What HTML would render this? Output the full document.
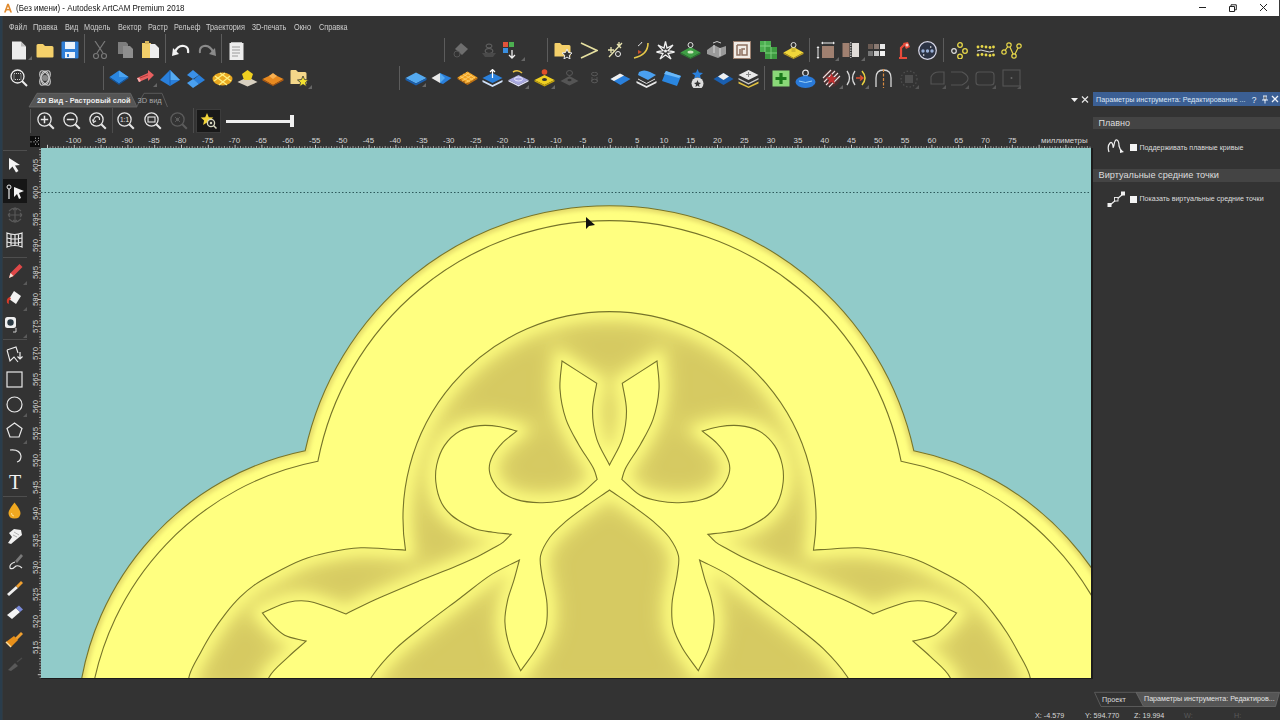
<!DOCTYPE html>
<html><head><meta charset="utf-8">
<style>
*{margin:0;padding:0;box-sizing:border-box}
html,body{width:1280px;height:720px;overflow:hidden;background:#333333;font-family:"Liberation Sans",sans-serif}
.a{position:absolute}
#title{left:0;top:0;width:1280px;height:16px;background:#ffffff}
#title .t{left:16px;top:3px;font-size:8px;line-height:10px;color:#111;white-space:nowrap;transform:scale(1,1.12);transform-origin:0 0}
.menu{top:22px;font-size:7.3px;line-height:9px;color:#cfcfcf;white-space:nowrap;transform:scale(1,1.12);transform-origin:0 0}
.sep{width:1px;background:#5a5a5a}
.rl{font-size:8px;color:#d2d2d2;white-space:nowrap;top:136px}
.vl{font-size:8px;color:#d2d2d2;white-space:nowrap;transform:rotate(-90deg);transform-origin:center}
.hdr{background:#444444;color:#dddddd;font-size:9.8px;white-space:nowrap}
.lbl{font-size:7.2px;color:#dcdcdc;white-space:nowrap}
.cb{background:#f4f4f4;width:7px;height:7px}
.st{top:710px;font-size:8px;color:#d8d8d8;white-space:nowrap}
</style></head><body>
<div class="a" style="left:0;top:16px;width:2px;height:704px;background:#2a3d4c"></div><div class="a" style="left:2px;top:16px;width:1px;height:704px;background:#313a40"></div>
<div id="title" class="a">
  <svg class="a" style="left:3px;top:3px" width="10" height="10" viewBox="0 0 10 10"><path d="M1 9.5 L4.2 0.8 L5.8 0.8 L9 9.5 L7.2 9.5 L5 3.2 L2.8 9.5Z" fill="#e08a2e"/><rect x="3" y="6" width="4" height="1.4" fill="#e08a2e"/></svg>
  <div class="a t">(Без имени) - Autodesk ArtCAM Premium 2018</div>
  <div class="a" style="left:1199px;top:7px;width:7px;height:1px;background:#222"></div>
  <svg class="a" style="left:1228px;top:3px" width="10" height="9"><path d="M1.5 3.5H6.5V8.5H1.5Z M3 3.5V1.8H8.3V6.8H6.5" fill="none" stroke="#222" stroke-width="1"/></svg>
  <svg class="a" style="left:1259px;top:3px" width="9" height="9"><path d="M1 1L8 8M8 1L1 8" stroke="#222" stroke-width="1"/></svg>
  <div class="a" style="left:1279px;top:0;width:1px;height:16px;background:#3a3a3a"></div>
</div>
<div class="a menu" style="left:9px">Файл</div>
<div class="a menu" style="left:33px">Правка</div>
<div class="a menu" style="left:65px">Вид</div>
<div class="a menu" style="left:84px">Модель</div>
<div class="a menu" style="left:118px">Вектор</div>
<div class="a menu" style="left:148px">Растр</div>
<div class="a menu" style="left:174px">Рельеф</div>
<div class="a menu" style="left:206px">Траектория</div>
<div class="a menu" style="left:252px">3D-печать</div>
<div class="a menu" style="left:294px">Окно</div>
<div class="a menu" style="left:319px">Справка</div>
<svg class="a" style="left:41px;top:148px" width="1050" height="530" viewBox="41 148 1050 530">
<defs>
<clipPath id="cpSil"><path d="M78.6 700.0 A285 285 0 0 1 305.2 450.7 A311.5 311.5 0 0 1 913.8 450.7 A285 285 0 0 1 1140.4 700.0 Z"/></clipPath>
<clipPath id="cpMain"><path d="M405.5 550.2 C398.4 549.7 391.5 549.1 384.3 548.7 C376.7 548.3 369.3 547.4 360.9 547.8 C350.9 548.3 338.3 550.3 328.1 552.5 C319.0 554.4 311.3 556.3 302.5 559.7 C292.4 563.5 280.1 570.2 271.2 575.0 C264.5 578.6 259.2 581.6 253.9 585.4 C248.8 589.0 244.5 592.8 240.0 597.2 C235.1 602.0 230.4 607.5 225.8 613.3 C221.0 619.4 216.2 626.2 212.0 632.8 C207.9 639.2 204.4 645.5 200.8 652.2 C197.0 659.3 192.2 666.5 189.7 674.4 C187.2 682.4 187.2 691.5 186.0 700.0 L265.0 700.0 C266.4 692.3 265.7 684.0 269.2 677.0 C273.1 669.4 282.2 662.8 288.6 656.6 C294.5 650.9 300.3 646.3 306.1 641.1 L306.1 641.1 C299.0 639.2 290.7 638.5 284.7 635.3 C279.3 632.4 275.0 627.6 271.1 623.6 C267.7 620.1 265.3 616.5 262.4 612.9 L262.4 612.9 C271.1 609.3 280.4 604.0 288.6 602.2 C295.4 600.7 301.6 600.4 308.0 601.2 C314.6 602.0 321.1 604.9 327.5 607.0 C333.8 609.1 339.8 611.6 346.0 613.9 L346.0 613.9 C356.0 609.0 365.1 604.3 376.1 599.3 C389.3 593.3 406.0 586.4 420.0 580.6 C432.7 575.4 446.1 570.4 456.5 566.0 C464.4 562.6 470.9 559.8 477.3 556.7 C482.9 553.9 488.3 550.9 492.9 548.3 C496.7 546.1 500.2 544.5 503.3 542.1 C506.2 539.8 508.5 536.9 511.1 534.3 L511.1 534.3 C505.0 533.6 498.7 533.0 492.9 532.2 C487.5 531.4 482.4 531.2 477.3 529.6 C472.0 527.9 466.3 524.9 461.7 522.3 C457.8 520.0 454.5 518.0 451.2 515.0 C447.7 511.8 444.2 508.1 441.7 503.3 C438.7 497.4 436.5 488.5 435.8 481.7 C435.2 475.8 435.5 470.7 436.7 465.0 C438.1 458.7 440.6 451.2 444.4 445.6 C448.3 439.9 454.0 434.3 460.0 431.0 C465.9 427.7 473.3 426.3 480.0 425.6 C486.6 424.9 493.7 425.7 500.0 426.7 C505.9 427.6 511.1 429.6 516.7 431.1 L516.7 431.1 C511.8 435.2 506.1 438.9 502.0 443.3 C498.3 447.2 494.8 451.4 492.7 455.8 C490.7 459.8 489.2 464.1 489.2 468.3 C489.2 472.5 490.7 476.9 492.7 480.8 C494.8 485.0 498.1 489.2 502.0 492.3 C506.1 495.6 511.1 497.9 516.7 499.6 C523.4 501.7 532.5 502.5 540.0 502.7 C546.9 502.9 553.5 502.3 560.0 501.0 C566.4 499.8 572.8 498.5 578.7 495.3 C585.3 491.7 591.0 484.7 597.2 479.4 L597.2 479.4 C596.1 476.1 595.8 473.4 594.0 469.4 C591.0 462.8 583.3 452.8 578.6 444.4 C574.0 436.2 569.1 428.4 566.0 419.4 C562.8 410.0 560.6 399.0 560.0 389.0 C559.4 379.5 561.3 370.3 562.0 361.0 L562.0 361.0 C573.6 368.4 585.1 375.9 596.7 383.3 L596.7 383.3 C595.3 392.5 592.5 401.7 592.5 411.0 C592.5 420.3 593.9 430.0 596.7 438.9 C599.5 448.0 605.2 456.3 609.5 465.0 L609.5 465.0 C613.8 456.3 619.5 448.0 622.3 438.9 C625.1 430.0 626.5 420.3 626.5 411.0 C626.5 401.7 623.7 392.5 622.3 383.3 L622.3 383.3 C633.9 375.9 645.4 368.4 657.0 361.0 L657.0 361.0 C657.7 370.3 659.6 379.5 659.0 389.0 C658.4 399.0 656.2 410.0 653.0 419.4 C649.9 428.4 645.0 436.2 640.4 444.4 C635.7 452.8 628.0 462.8 625.0 469.4 C623.2 473.4 622.9 476.1 621.8 479.4 L621.8 479.4 C628.0 484.7 633.7 491.7 640.3 495.3 C646.2 498.5 652.6 499.8 659.0 501.0 C665.5 502.3 672.1 502.9 679.0 502.7 C686.5 502.5 695.6 501.7 702.3 499.6 C707.9 497.9 712.9 495.6 717.0 492.3 C720.9 489.2 724.2 485.0 726.3 480.8 C728.3 476.9 729.8 472.5 729.8 468.3 C729.8 464.1 728.3 459.8 726.3 455.8 C724.2 451.4 720.7 447.2 717.0 443.3 C712.9 438.9 707.2 435.2 702.3 431.1 L702.3 431.1 C707.9 429.6 713.1 427.6 719.0 426.7 C725.3 425.7 732.4 424.9 739.0 425.6 C745.7 426.3 753.1 427.7 759.0 431.0 C765.0 434.3 770.7 439.9 774.6 445.6 C778.4 451.2 780.9 458.7 782.3 465.0 C783.5 470.7 783.8 475.8 783.2 481.7 C782.5 488.5 780.3 497.4 777.3 503.3 C774.8 508.1 771.3 511.8 767.8 515.0 C764.5 518.0 761.2 520.0 757.3 522.3 C752.7 524.9 747.0 527.9 741.7 529.6 C736.6 531.2 731.5 531.4 726.1 532.2 C720.3 533.0 714.0 533.6 707.9 534.3 L707.9 534.3 C710.5 536.9 712.8 539.8 715.7 542.1 C718.8 544.5 722.3 546.1 726.1 548.3 C730.7 550.9 736.1 553.9 741.7 556.7 C748.1 559.8 754.6 562.6 762.5 566.0 C772.9 570.4 786.3 575.4 799.0 580.6 C813.0 586.4 829.7 593.3 842.9 599.3 C853.9 604.3 863.0 609.0 873.0 613.9 L873.0 613.9 C879.2 611.6 885.2 609.1 891.5 607.0 C897.9 604.9 904.4 602.0 911.0 601.2 C917.4 600.4 923.6 600.7 930.4 602.2 C938.6 604.0 947.9 609.3 956.6 612.9 L956.6 612.9 C953.7 616.5 951.3 620.1 947.9 623.6 C944.0 627.6 939.7 632.4 934.3 635.3 C928.3 638.5 920.0 639.2 912.9 641.1 L912.9 641.1 C918.7 646.3 924.5 650.9 930.4 656.6 C936.8 662.8 945.9 669.4 949.8 677.0 C953.3 684.0 952.6 692.3 954.0 700.0 L1033.0 700.0 C1031.8 691.5 1031.8 682.4 1029.3 674.4 C1026.8 666.5 1022.0 659.3 1018.2 652.2 C1014.6 645.5 1011.1 639.2 1007.0 632.8 C1002.8 626.2 998.0 619.4 993.2 613.3 C988.6 607.5 983.9 602.0 979.0 597.2 C974.5 592.8 970.2 589.0 965.1 585.4 C959.8 581.6 954.5 578.6 947.8 575.0 C938.9 570.2 926.6 563.5 916.5 559.7 C907.7 556.3 900.0 554.4 890.9 552.5 C880.7 550.3 868.1 548.3 858.1 547.8 C849.7 547.4 842.3 548.3 834.7 548.7 C827.5 549.1 820.6 549.7 813.5 550.2 A206.5 206.5 0 1 0 405.5 550.2 Z"/></clipPath>
<clipPath id="cpVase"><path d="M609.5 490.0 C601.9 495.3 594.0 500.4 586.6 505.8 C579.4 511.0 571.9 516.2 565.5 521.7 C559.7 526.8 553.9 531.6 549.7 537.5 C545.7 543.1 541.8 549.7 540.5 556.0 C539.3 562.0 541.0 567.6 541.8 574.4 C542.9 583.0 546.4 594.3 547.0 603.5 C547.5 611.8 547.6 619.7 545.8 627.2 C544.0 634.6 540.4 641.4 536.5 648.3 C532.2 655.9 526.0 663.2 520.7 670.7 L520.7 670.7 C517.2 663.2 512.7 656.2 510.1 648.3 C507.4 640.0 505.2 630.2 504.9 621.9 C504.6 614.5 506.0 607.8 507.5 600.8 C509.0 593.7 512.1 586.6 514.1 579.7 C516.0 573.0 517.6 566.6 519.4 560.0 L519.4 560.0 C510.2 564.8 501.0 568.5 491.7 574.4 C481.2 581.0 471.2 589.8 460.0 598.2 C447.4 607.7 431.6 619.3 420.0 628.5 C410.7 635.9 403.3 641.3 395.5 648.9 C387.3 657.0 378.3 666.9 372.2 676.0 C366.9 683.9 364.1 692.0 360.0 700.0 L859.0 700.0 C854.9 692.0 852.1 683.9 846.8 676.0 C840.7 666.9 831.7 657.0 823.5 648.9 C815.7 641.3 808.3 635.9 799.0 628.5 C787.4 619.3 771.6 607.7 759.0 598.2 C747.8 589.8 737.8 581.0 727.3 574.4 C718.0 568.5 708.8 564.8 699.6 560.0 L699.6 560.0 C701.4 566.6 703.0 573.0 704.9 579.7 C706.9 586.6 710.0 593.7 711.5 600.8 C713.0 607.8 714.4 614.5 714.1 621.9 C713.8 630.2 711.6 640.0 708.9 648.3 C706.3 656.2 701.8 663.2 698.3 670.7 L698.3 670.7 C693.0 663.2 686.8 655.9 682.5 648.3 C678.6 641.4 675.0 634.6 673.2 627.2 C671.4 619.7 671.5 611.8 672.0 603.5 C672.6 594.3 676.1 583.0 677.2 574.4 C678.0 567.6 679.7 562.0 678.5 556.0 C677.2 549.7 673.3 543.1 669.3 537.5 C665.1 531.6 659.3 526.8 653.5 521.7 C647.1 516.2 639.6 511.0 632.4 505.8 C625.0 500.4 617.1 495.3 609.5 490.0 Z"/></clipPath>
<filter id="bl6" x="-10%" y="-10%" width="120%" height="120%"><feGaussianBlur stdDeviation="6.5"/></filter>
<filter id="bl10" x="-10%" y="-10%" width="120%" height="120%"><feGaussianBlur stdDeviation="10"/></filter>
<filter id="bl2" x="-10%" y="-10%" width="120%" height="120%"><feGaussianBlur stdDeviation="2.2"/></filter>
</defs>
<rect x="41" y="148" width="1050" height="530" fill="#91cbc9"/>
<path d="M78.6 700.0 A285 285 0 0 1 305.2 450.7 A311.5 311.5 0 0 1 913.8 450.7 A285 285 0 0 1 1140.4 700.0 Z" fill="#ffff80"/>
<g clip-path="url(#cpSil)"><path d="M78.6 700.0 A285 285 0 0 1 305.2 450.7 A311.5 311.5 0 0 1 913.8 450.7 A285 285 0 0 1 1140.4 700.0 Z" fill="none" stroke="#e4da6a" stroke-width="7" filter="url(#bl2)"/></g>
<g clip-path="url(#cpMain)"><rect x="41" y="148" width="1050" height="600" fill="#d6ca62"/><path d="M405.5 550.2 C398.4 549.7 391.5 549.1 384.3 548.7 C376.7 548.3 369.3 547.4 360.9 547.8 C350.9 548.3 338.3 550.3 328.1 552.5 C319.0 554.4 311.3 556.3 302.5 559.7 C292.4 563.5 280.1 570.2 271.2 575.0 C264.5 578.6 259.2 581.6 253.9 585.4 C248.8 589.0 244.5 592.8 240.0 597.2 C235.1 602.0 230.4 607.5 225.8 613.3 C221.0 619.4 216.2 626.2 212.0 632.8 C207.9 639.2 204.4 645.5 200.8 652.2 C197.0 659.3 192.2 666.5 189.7 674.4 C187.2 682.4 187.2 691.5 186.0 700.0 L265.0 700.0 C266.4 692.3 265.7 684.0 269.2 677.0 C273.1 669.4 282.2 662.8 288.6 656.6 C294.5 650.9 300.3 646.3 306.1 641.1 L306.1 641.1 C299.0 639.2 290.7 638.5 284.7 635.3 C279.3 632.4 275.0 627.6 271.1 623.6 C267.7 620.1 265.3 616.5 262.4 612.9 L262.4 612.9 C271.1 609.3 280.4 604.0 288.6 602.2 C295.4 600.7 301.6 600.4 308.0 601.2 C314.6 602.0 321.1 604.9 327.5 607.0 C333.8 609.1 339.8 611.6 346.0 613.9 L346.0 613.9 C356.0 609.0 365.1 604.3 376.1 599.3 C389.3 593.3 406.0 586.4 420.0 580.6 C432.7 575.4 446.1 570.4 456.5 566.0 C464.4 562.6 470.9 559.8 477.3 556.7 C482.9 553.9 488.3 550.9 492.9 548.3 C496.7 546.1 500.2 544.5 503.3 542.1 C506.2 539.8 508.5 536.9 511.1 534.3 L511.1 534.3 C505.0 533.6 498.7 533.0 492.9 532.2 C487.5 531.4 482.4 531.2 477.3 529.6 C472.0 527.9 466.3 524.9 461.7 522.3 C457.8 520.0 454.5 518.0 451.2 515.0 C447.7 511.8 444.2 508.1 441.7 503.3 C438.7 497.4 436.5 488.5 435.8 481.7 C435.2 475.8 435.5 470.7 436.7 465.0 C438.1 458.7 440.6 451.2 444.4 445.6 C448.3 439.9 454.0 434.3 460.0 431.0 C465.9 427.7 473.3 426.3 480.0 425.6 C486.6 424.9 493.7 425.7 500.0 426.7 C505.9 427.6 511.1 429.6 516.7 431.1 L516.7 431.1 C511.8 435.2 506.1 438.9 502.0 443.3 C498.3 447.2 494.8 451.4 492.7 455.8 C490.7 459.8 489.2 464.1 489.2 468.3 C489.2 472.5 490.7 476.9 492.7 480.8 C494.8 485.0 498.1 489.2 502.0 492.3 C506.1 495.6 511.1 497.9 516.7 499.6 C523.4 501.7 532.5 502.5 540.0 502.7 C546.9 502.9 553.5 502.3 560.0 501.0 C566.4 499.8 572.8 498.5 578.7 495.3 C585.3 491.7 591.0 484.7 597.2 479.4 L597.2 479.4 C596.1 476.1 595.8 473.4 594.0 469.4 C591.0 462.8 583.3 452.8 578.6 444.4 C574.0 436.2 569.1 428.4 566.0 419.4 C562.8 410.0 560.6 399.0 560.0 389.0 C559.4 379.5 561.3 370.3 562.0 361.0 L562.0 361.0 C573.6 368.4 585.1 375.9 596.7 383.3 L596.7 383.3 C595.3 392.5 592.5 401.7 592.5 411.0 C592.5 420.3 593.9 430.0 596.7 438.9 C599.5 448.0 605.2 456.3 609.5 465.0 L609.5 465.0 C613.8 456.3 619.5 448.0 622.3 438.9 C625.1 430.0 626.5 420.3 626.5 411.0 C626.5 401.7 623.7 392.5 622.3 383.3 L622.3 383.3 C633.9 375.9 645.4 368.4 657.0 361.0 L657.0 361.0 C657.7 370.3 659.6 379.5 659.0 389.0 C658.4 399.0 656.2 410.0 653.0 419.4 C649.9 428.4 645.0 436.2 640.4 444.4 C635.7 452.8 628.0 462.8 625.0 469.4 C623.2 473.4 622.9 476.1 621.8 479.4 L621.8 479.4 C628.0 484.7 633.7 491.7 640.3 495.3 C646.2 498.5 652.6 499.8 659.0 501.0 C665.5 502.3 672.1 502.9 679.0 502.7 C686.5 502.5 695.6 501.7 702.3 499.6 C707.9 497.9 712.9 495.6 717.0 492.3 C720.9 489.2 724.2 485.0 726.3 480.8 C728.3 476.9 729.8 472.5 729.8 468.3 C729.8 464.1 728.3 459.8 726.3 455.8 C724.2 451.4 720.7 447.2 717.0 443.3 C712.9 438.9 707.2 435.2 702.3 431.1 L702.3 431.1 C707.9 429.6 713.1 427.6 719.0 426.7 C725.3 425.7 732.4 424.9 739.0 425.6 C745.7 426.3 753.1 427.7 759.0 431.0 C765.0 434.3 770.7 439.9 774.6 445.6 C778.4 451.2 780.9 458.7 782.3 465.0 C783.5 470.7 783.8 475.8 783.2 481.7 C782.5 488.5 780.3 497.4 777.3 503.3 C774.8 508.1 771.3 511.8 767.8 515.0 C764.5 518.0 761.2 520.0 757.3 522.3 C752.7 524.9 747.0 527.9 741.7 529.6 C736.6 531.2 731.5 531.4 726.1 532.2 C720.3 533.0 714.0 533.6 707.9 534.3 L707.9 534.3 C710.5 536.9 712.8 539.8 715.7 542.1 C718.8 544.5 722.3 546.1 726.1 548.3 C730.7 550.9 736.1 553.9 741.7 556.7 C748.1 559.8 754.6 562.6 762.5 566.0 C772.9 570.4 786.3 575.4 799.0 580.6 C813.0 586.4 829.7 593.3 842.9 599.3 C853.9 604.3 863.0 609.0 873.0 613.9 L873.0 613.9 C879.2 611.6 885.2 609.1 891.5 607.0 C897.9 604.9 904.4 602.0 911.0 601.2 C917.4 600.4 923.6 600.7 930.4 602.2 C938.6 604.0 947.9 609.3 956.6 612.9 L956.6 612.9 C953.7 616.5 951.3 620.1 947.9 623.6 C944.0 627.6 939.7 632.4 934.3 635.3 C928.3 638.5 920.0 639.2 912.9 641.1 L912.9 641.1 C918.7 646.3 924.5 650.9 930.4 656.6 C936.8 662.8 945.9 669.4 949.8 677.0 C953.3 684.0 952.6 692.3 954.0 700.0 L1033.0 700.0 C1031.8 691.5 1031.8 682.4 1029.3 674.4 C1026.8 666.5 1022.0 659.3 1018.2 652.2 C1014.6 645.5 1011.1 639.2 1007.0 632.8 C1002.8 626.2 998.0 619.4 993.2 613.3 C988.6 607.5 983.9 602.0 979.0 597.2 C974.5 592.8 970.2 589.0 965.1 585.4 C959.8 581.6 954.5 578.6 947.8 575.0 C938.9 570.2 926.6 563.5 916.5 559.7 C907.7 556.3 900.0 554.4 890.9 552.5 C880.7 550.3 868.1 548.3 858.1 547.8 C849.7 547.4 842.3 548.3 834.7 548.7 C827.5 549.1 820.6 549.7 813.5 550.2 A206.5 206.5 0 1 0 405.5 550.2 Z" fill="none" stroke="#ffff80" stroke-width="26" opacity="0.45" filter="url(#bl10)"/><path d="M405.5 550.2 C398.4 549.7 391.5 549.1 384.3 548.7 C376.7 548.3 369.3 547.4 360.9 547.8 C350.9 548.3 338.3 550.3 328.1 552.5 C319.0 554.4 311.3 556.3 302.5 559.7 C292.4 563.5 280.1 570.2 271.2 575.0 C264.5 578.6 259.2 581.6 253.9 585.4 C248.8 589.0 244.5 592.8 240.0 597.2 C235.1 602.0 230.4 607.5 225.8 613.3 C221.0 619.4 216.2 626.2 212.0 632.8 C207.9 639.2 204.4 645.5 200.8 652.2 C197.0 659.3 192.2 666.5 189.7 674.4 C187.2 682.4 187.2 691.5 186.0 700.0 L265.0 700.0 C266.4 692.3 265.7 684.0 269.2 677.0 C273.1 669.4 282.2 662.8 288.6 656.6 C294.5 650.9 300.3 646.3 306.1 641.1 L306.1 641.1 C299.0 639.2 290.7 638.5 284.7 635.3 C279.3 632.4 275.0 627.6 271.1 623.6 C267.7 620.1 265.3 616.5 262.4 612.9 L262.4 612.9 C271.1 609.3 280.4 604.0 288.6 602.2 C295.4 600.7 301.6 600.4 308.0 601.2 C314.6 602.0 321.1 604.9 327.5 607.0 C333.8 609.1 339.8 611.6 346.0 613.9 L346.0 613.9 C356.0 609.0 365.1 604.3 376.1 599.3 C389.3 593.3 406.0 586.4 420.0 580.6 C432.7 575.4 446.1 570.4 456.5 566.0 C464.4 562.6 470.9 559.8 477.3 556.7 C482.9 553.9 488.3 550.9 492.9 548.3 C496.7 546.1 500.2 544.5 503.3 542.1 C506.2 539.8 508.5 536.9 511.1 534.3 L511.1 534.3 C505.0 533.6 498.7 533.0 492.9 532.2 C487.5 531.4 482.4 531.2 477.3 529.6 C472.0 527.9 466.3 524.9 461.7 522.3 C457.8 520.0 454.5 518.0 451.2 515.0 C447.7 511.8 444.2 508.1 441.7 503.3 C438.7 497.4 436.5 488.5 435.8 481.7 C435.2 475.8 435.5 470.7 436.7 465.0 C438.1 458.7 440.6 451.2 444.4 445.6 C448.3 439.9 454.0 434.3 460.0 431.0 C465.9 427.7 473.3 426.3 480.0 425.6 C486.6 424.9 493.7 425.7 500.0 426.7 C505.9 427.6 511.1 429.6 516.7 431.1 L516.7 431.1 C511.8 435.2 506.1 438.9 502.0 443.3 C498.3 447.2 494.8 451.4 492.7 455.8 C490.7 459.8 489.2 464.1 489.2 468.3 C489.2 472.5 490.7 476.9 492.7 480.8 C494.8 485.0 498.1 489.2 502.0 492.3 C506.1 495.6 511.1 497.9 516.7 499.6 C523.4 501.7 532.5 502.5 540.0 502.7 C546.9 502.9 553.5 502.3 560.0 501.0 C566.4 499.8 572.8 498.5 578.7 495.3 C585.3 491.7 591.0 484.7 597.2 479.4 L597.2 479.4 C596.1 476.1 595.8 473.4 594.0 469.4 C591.0 462.8 583.3 452.8 578.6 444.4 C574.0 436.2 569.1 428.4 566.0 419.4 C562.8 410.0 560.6 399.0 560.0 389.0 C559.4 379.5 561.3 370.3 562.0 361.0 L562.0 361.0 C573.6 368.4 585.1 375.9 596.7 383.3 L596.7 383.3 C595.3 392.5 592.5 401.7 592.5 411.0 C592.5 420.3 593.9 430.0 596.7 438.9 C599.5 448.0 605.2 456.3 609.5 465.0 L609.5 465.0 C613.8 456.3 619.5 448.0 622.3 438.9 C625.1 430.0 626.5 420.3 626.5 411.0 C626.5 401.7 623.7 392.5 622.3 383.3 L622.3 383.3 C633.9 375.9 645.4 368.4 657.0 361.0 L657.0 361.0 C657.7 370.3 659.6 379.5 659.0 389.0 C658.4 399.0 656.2 410.0 653.0 419.4 C649.9 428.4 645.0 436.2 640.4 444.4 C635.7 452.8 628.0 462.8 625.0 469.4 C623.2 473.4 622.9 476.1 621.8 479.4 L621.8 479.4 C628.0 484.7 633.7 491.7 640.3 495.3 C646.2 498.5 652.6 499.8 659.0 501.0 C665.5 502.3 672.1 502.9 679.0 502.7 C686.5 502.5 695.6 501.7 702.3 499.6 C707.9 497.9 712.9 495.6 717.0 492.3 C720.9 489.2 724.2 485.0 726.3 480.8 C728.3 476.9 729.8 472.5 729.8 468.3 C729.8 464.1 728.3 459.8 726.3 455.8 C724.2 451.4 720.7 447.2 717.0 443.3 C712.9 438.9 707.2 435.2 702.3 431.1 L702.3 431.1 C707.9 429.6 713.1 427.6 719.0 426.7 C725.3 425.7 732.4 424.9 739.0 425.6 C745.7 426.3 753.1 427.7 759.0 431.0 C765.0 434.3 770.7 439.9 774.6 445.6 C778.4 451.2 780.9 458.7 782.3 465.0 C783.5 470.7 783.8 475.8 783.2 481.7 C782.5 488.5 780.3 497.4 777.3 503.3 C774.8 508.1 771.3 511.8 767.8 515.0 C764.5 518.0 761.2 520.0 757.3 522.3 C752.7 524.9 747.0 527.9 741.7 529.6 C736.6 531.2 731.5 531.4 726.1 532.2 C720.3 533.0 714.0 533.6 707.9 534.3 L707.9 534.3 C710.5 536.9 712.8 539.8 715.7 542.1 C718.8 544.5 722.3 546.1 726.1 548.3 C730.7 550.9 736.1 553.9 741.7 556.7 C748.1 559.8 754.6 562.6 762.5 566.0 C772.9 570.4 786.3 575.4 799.0 580.6 C813.0 586.4 829.7 593.3 842.9 599.3 C853.9 604.3 863.0 609.0 873.0 613.9 L873.0 613.9 C879.2 611.6 885.2 609.1 891.5 607.0 C897.9 604.9 904.4 602.0 911.0 601.2 C917.4 600.4 923.6 600.7 930.4 602.2 C938.6 604.0 947.9 609.3 956.6 612.9 L956.6 612.9 C953.7 616.5 951.3 620.1 947.9 623.6 C944.0 627.6 939.7 632.4 934.3 635.3 C928.3 638.5 920.0 639.2 912.9 641.1 L912.9 641.1 C918.7 646.3 924.5 650.9 930.4 656.6 C936.8 662.8 945.9 669.4 949.8 677.0 C953.3 684.0 952.6 692.3 954.0 700.0 L1033.0 700.0 C1031.8 691.5 1031.8 682.4 1029.3 674.4 C1026.8 666.5 1022.0 659.3 1018.2 652.2 C1014.6 645.5 1011.1 639.2 1007.0 632.8 C1002.8 626.2 998.0 619.4 993.2 613.3 C988.6 607.5 983.9 602.0 979.0 597.2 C974.5 592.8 970.2 589.0 965.1 585.4 C959.8 581.6 954.5 578.6 947.8 575.0 C938.9 570.2 926.6 563.5 916.5 559.7 C907.7 556.3 900.0 554.4 890.9 552.5 C880.7 550.3 868.1 548.3 858.1 547.8 C849.7 547.4 842.3 548.3 834.7 548.7 C827.5 549.1 820.6 549.7 813.5 550.2 A206.5 206.5 0 1 0 405.5 550.2 Z" fill="none" stroke="#ffff80" stroke-width="12" filter="url(#bl6)"/></g>
<g clip-path="url(#cpVase)"><rect x="41" y="148" width="1050" height="600" fill="#d6ca62"/><path d="M609.5 490.0 C601.9 495.3 594.0 500.4 586.6 505.8 C579.4 511.0 571.9 516.2 565.5 521.7 C559.7 526.8 553.9 531.6 549.7 537.5 C545.7 543.1 541.8 549.7 540.5 556.0 C539.3 562.0 541.0 567.6 541.8 574.4 C542.9 583.0 546.4 594.3 547.0 603.5 C547.5 611.8 547.6 619.7 545.8 627.2 C544.0 634.6 540.4 641.4 536.5 648.3 C532.2 655.9 526.0 663.2 520.7 670.7 L520.7 670.7 C517.2 663.2 512.7 656.2 510.1 648.3 C507.4 640.0 505.2 630.2 504.9 621.9 C504.6 614.5 506.0 607.8 507.5 600.8 C509.0 593.7 512.1 586.6 514.1 579.7 C516.0 573.0 517.6 566.6 519.4 560.0 L519.4 560.0 C510.2 564.8 501.0 568.5 491.7 574.4 C481.2 581.0 471.2 589.8 460.0 598.2 C447.4 607.7 431.6 619.3 420.0 628.5 C410.7 635.9 403.3 641.3 395.5 648.9 C387.3 657.0 378.3 666.9 372.2 676.0 C366.9 683.9 364.1 692.0 360.0 700.0 L859.0 700.0 C854.9 692.0 852.1 683.9 846.8 676.0 C840.7 666.9 831.7 657.0 823.5 648.9 C815.7 641.3 808.3 635.9 799.0 628.5 C787.4 619.3 771.6 607.7 759.0 598.2 C747.8 589.8 737.8 581.0 727.3 574.4 C718.0 568.5 708.8 564.8 699.6 560.0 L699.6 560.0 C701.4 566.6 703.0 573.0 704.9 579.7 C706.9 586.6 710.0 593.7 711.5 600.8 C713.0 607.8 714.4 614.5 714.1 621.9 C713.8 630.2 711.6 640.0 708.9 648.3 C706.3 656.2 701.8 663.2 698.3 670.7 L698.3 670.7 C693.0 663.2 686.8 655.9 682.5 648.3 C678.6 641.4 675.0 634.6 673.2 627.2 C671.4 619.7 671.5 611.8 672.0 603.5 C672.6 594.3 676.1 583.0 677.2 574.4 C678.0 567.6 679.7 562.0 678.5 556.0 C677.2 549.7 673.3 543.1 669.3 537.5 C665.1 531.6 659.3 526.8 653.5 521.7 C647.1 516.2 639.6 511.0 632.4 505.8 C625.0 500.4 617.1 495.3 609.5 490.0 Z" fill="none" stroke="#ffff80" stroke-width="26" opacity="0.45" filter="url(#bl10)"/><path d="M609.5 490.0 C601.9 495.3 594.0 500.4 586.6 505.8 C579.4 511.0 571.9 516.2 565.5 521.7 C559.7 526.8 553.9 531.6 549.7 537.5 C545.7 543.1 541.8 549.7 540.5 556.0 C539.3 562.0 541.0 567.6 541.8 574.4 C542.9 583.0 546.4 594.3 547.0 603.5 C547.5 611.8 547.6 619.7 545.8 627.2 C544.0 634.6 540.4 641.4 536.5 648.3 C532.2 655.9 526.0 663.2 520.7 670.7 L520.7 670.7 C517.2 663.2 512.7 656.2 510.1 648.3 C507.4 640.0 505.2 630.2 504.9 621.9 C504.6 614.5 506.0 607.8 507.5 600.8 C509.0 593.7 512.1 586.6 514.1 579.7 C516.0 573.0 517.6 566.6 519.4 560.0 L519.4 560.0 C510.2 564.8 501.0 568.5 491.7 574.4 C481.2 581.0 471.2 589.8 460.0 598.2 C447.4 607.7 431.6 619.3 420.0 628.5 C410.7 635.9 403.3 641.3 395.5 648.9 C387.3 657.0 378.3 666.9 372.2 676.0 C366.9 683.9 364.1 692.0 360.0 700.0 L859.0 700.0 C854.9 692.0 852.1 683.9 846.8 676.0 C840.7 666.9 831.7 657.0 823.5 648.9 C815.7 641.3 808.3 635.9 799.0 628.5 C787.4 619.3 771.6 607.7 759.0 598.2 C747.8 589.8 737.8 581.0 727.3 574.4 C718.0 568.5 708.8 564.8 699.6 560.0 L699.6 560.0 C701.4 566.6 703.0 573.0 704.9 579.7 C706.9 586.6 710.0 593.7 711.5 600.8 C713.0 607.8 714.4 614.5 714.1 621.9 C713.8 630.2 711.6 640.0 708.9 648.3 C706.3 656.2 701.8 663.2 698.3 670.7 L698.3 670.7 C693.0 663.2 686.8 655.9 682.5 648.3 C678.6 641.4 675.0 634.6 673.2 627.2 C671.4 619.7 671.5 611.8 672.0 603.5 C672.6 594.3 676.1 583.0 677.2 574.4 C678.0 567.6 679.7 562.0 678.5 556.0 C677.2 549.7 673.3 543.1 669.3 537.5 C665.1 531.6 659.3 526.8 653.5 521.7 C647.1 516.2 639.6 511.0 632.4 505.8 C625.0 500.4 617.1 495.3 609.5 490.0 Z" fill="none" stroke="#ffff80" stroke-width="12" filter="url(#bl6)"/></g>
<g fill="none" stroke="#76742a" stroke-width="1.1">
<path d="M78.6 700.0 A285 285 0 0 1 305.2 450.7 A311.5 311.5 0 0 1 913.8 450.7 A285 285 0 0 1 1140.4 700.0 Z"/><path d="M90.8 700.0 A284 284 0 0 1 317.9 461.2 A297 297 0 0 1 901.1 461.2 A284 284 0 0 1 1128.2 700.0"/><path d="M405.5 550.2 C398.4 549.7 391.5 549.1 384.3 548.7 C376.7 548.3 369.3 547.4 360.9 547.8 C350.9 548.3 338.3 550.3 328.1 552.5 C319.0 554.4 311.3 556.3 302.5 559.7 C292.4 563.5 280.1 570.2 271.2 575.0 C264.5 578.6 259.2 581.6 253.9 585.4 C248.8 589.0 244.5 592.8 240.0 597.2 C235.1 602.0 230.4 607.5 225.8 613.3 C221.0 619.4 216.2 626.2 212.0 632.8 C207.9 639.2 204.4 645.5 200.8 652.2 C197.0 659.3 192.2 666.5 189.7 674.4 C187.2 682.4 187.2 691.5 186.0 700.0 L265.0 700.0 C266.4 692.3 265.7 684.0 269.2 677.0 C273.1 669.4 282.2 662.8 288.6 656.6 C294.5 650.9 300.3 646.3 306.1 641.1 L306.1 641.1 C299.0 639.2 290.7 638.5 284.7 635.3 C279.3 632.4 275.0 627.6 271.1 623.6 C267.7 620.1 265.3 616.5 262.4 612.9 L262.4 612.9 C271.1 609.3 280.4 604.0 288.6 602.2 C295.4 600.7 301.6 600.4 308.0 601.2 C314.6 602.0 321.1 604.9 327.5 607.0 C333.8 609.1 339.8 611.6 346.0 613.9 L346.0 613.9 C356.0 609.0 365.1 604.3 376.1 599.3 C389.3 593.3 406.0 586.4 420.0 580.6 C432.7 575.4 446.1 570.4 456.5 566.0 C464.4 562.6 470.9 559.8 477.3 556.7 C482.9 553.9 488.3 550.9 492.9 548.3 C496.7 546.1 500.2 544.5 503.3 542.1 C506.2 539.8 508.5 536.9 511.1 534.3 L511.1 534.3 C505.0 533.6 498.7 533.0 492.9 532.2 C487.5 531.4 482.4 531.2 477.3 529.6 C472.0 527.9 466.3 524.9 461.7 522.3 C457.8 520.0 454.5 518.0 451.2 515.0 C447.7 511.8 444.2 508.1 441.7 503.3 C438.7 497.4 436.5 488.5 435.8 481.7 C435.2 475.8 435.5 470.7 436.7 465.0 C438.1 458.7 440.6 451.2 444.4 445.6 C448.3 439.9 454.0 434.3 460.0 431.0 C465.9 427.7 473.3 426.3 480.0 425.6 C486.6 424.9 493.7 425.7 500.0 426.7 C505.9 427.6 511.1 429.6 516.7 431.1 L516.7 431.1 C511.8 435.2 506.1 438.9 502.0 443.3 C498.3 447.2 494.8 451.4 492.7 455.8 C490.7 459.8 489.2 464.1 489.2 468.3 C489.2 472.5 490.7 476.9 492.7 480.8 C494.8 485.0 498.1 489.2 502.0 492.3 C506.1 495.6 511.1 497.9 516.7 499.6 C523.4 501.7 532.5 502.5 540.0 502.7 C546.9 502.9 553.5 502.3 560.0 501.0 C566.4 499.8 572.8 498.5 578.7 495.3 C585.3 491.7 591.0 484.7 597.2 479.4 L597.2 479.4 C596.1 476.1 595.8 473.4 594.0 469.4 C591.0 462.8 583.3 452.8 578.6 444.4 C574.0 436.2 569.1 428.4 566.0 419.4 C562.8 410.0 560.6 399.0 560.0 389.0 C559.4 379.5 561.3 370.3 562.0 361.0 L562.0 361.0 C573.6 368.4 585.1 375.9 596.7 383.3 L596.7 383.3 C595.3 392.5 592.5 401.7 592.5 411.0 C592.5 420.3 593.9 430.0 596.7 438.9 C599.5 448.0 605.2 456.3 609.5 465.0 L609.5 465.0 C613.8 456.3 619.5 448.0 622.3 438.9 C625.1 430.0 626.5 420.3 626.5 411.0 C626.5 401.7 623.7 392.5 622.3 383.3 L622.3 383.3 C633.9 375.9 645.4 368.4 657.0 361.0 L657.0 361.0 C657.7 370.3 659.6 379.5 659.0 389.0 C658.4 399.0 656.2 410.0 653.0 419.4 C649.9 428.4 645.0 436.2 640.4 444.4 C635.7 452.8 628.0 462.8 625.0 469.4 C623.2 473.4 622.9 476.1 621.8 479.4 L621.8 479.4 C628.0 484.7 633.7 491.7 640.3 495.3 C646.2 498.5 652.6 499.8 659.0 501.0 C665.5 502.3 672.1 502.9 679.0 502.7 C686.5 502.5 695.6 501.7 702.3 499.6 C707.9 497.9 712.9 495.6 717.0 492.3 C720.9 489.2 724.2 485.0 726.3 480.8 C728.3 476.9 729.8 472.5 729.8 468.3 C729.8 464.1 728.3 459.8 726.3 455.8 C724.2 451.4 720.7 447.2 717.0 443.3 C712.9 438.9 707.2 435.2 702.3 431.1 L702.3 431.1 C707.9 429.6 713.1 427.6 719.0 426.7 C725.3 425.7 732.4 424.9 739.0 425.6 C745.7 426.3 753.1 427.7 759.0 431.0 C765.0 434.3 770.7 439.9 774.6 445.6 C778.4 451.2 780.9 458.7 782.3 465.0 C783.5 470.7 783.8 475.8 783.2 481.7 C782.5 488.5 780.3 497.4 777.3 503.3 C774.8 508.1 771.3 511.8 767.8 515.0 C764.5 518.0 761.2 520.0 757.3 522.3 C752.7 524.9 747.0 527.9 741.7 529.6 C736.6 531.2 731.5 531.4 726.1 532.2 C720.3 533.0 714.0 533.6 707.9 534.3 L707.9 534.3 C710.5 536.9 712.8 539.8 715.7 542.1 C718.8 544.5 722.3 546.1 726.1 548.3 C730.7 550.9 736.1 553.9 741.7 556.7 C748.1 559.8 754.6 562.6 762.5 566.0 C772.9 570.4 786.3 575.4 799.0 580.6 C813.0 586.4 829.7 593.3 842.9 599.3 C853.9 604.3 863.0 609.0 873.0 613.9 L873.0 613.9 C879.2 611.6 885.2 609.1 891.5 607.0 C897.9 604.9 904.4 602.0 911.0 601.2 C917.4 600.4 923.6 600.7 930.4 602.2 C938.6 604.0 947.9 609.3 956.6 612.9 L956.6 612.9 C953.7 616.5 951.3 620.1 947.9 623.6 C944.0 627.6 939.7 632.4 934.3 635.3 C928.3 638.5 920.0 639.2 912.9 641.1 L912.9 641.1 C918.7 646.3 924.5 650.9 930.4 656.6 C936.8 662.8 945.9 669.4 949.8 677.0 C953.3 684.0 952.6 692.3 954.0 700.0 L1033.0 700.0 C1031.8 691.5 1031.8 682.4 1029.3 674.4 C1026.8 666.5 1022.0 659.3 1018.2 652.2 C1014.6 645.5 1011.1 639.2 1007.0 632.8 C1002.8 626.2 998.0 619.4 993.2 613.3 C988.6 607.5 983.9 602.0 979.0 597.2 C974.5 592.8 970.2 589.0 965.1 585.4 C959.8 581.6 954.5 578.6 947.8 575.0 C938.9 570.2 926.6 563.5 916.5 559.7 C907.7 556.3 900.0 554.4 890.9 552.5 C880.7 550.3 868.1 548.3 858.1 547.8 C849.7 547.4 842.3 548.3 834.7 548.7 C827.5 549.1 820.6 549.7 813.5 550.2 A206.5 206.5 0 1 0 405.5 550.2 Z"/><path d="M609.5 490.0 C601.9 495.3 594.0 500.4 586.6 505.8 C579.4 511.0 571.9 516.2 565.5 521.7 C559.7 526.8 553.9 531.6 549.7 537.5 C545.7 543.1 541.8 549.7 540.5 556.0 C539.3 562.0 541.0 567.6 541.8 574.4 C542.9 583.0 546.4 594.3 547.0 603.5 C547.5 611.8 547.6 619.7 545.8 627.2 C544.0 634.6 540.4 641.4 536.5 648.3 C532.2 655.9 526.0 663.2 520.7 670.7 L520.7 670.7 C517.2 663.2 512.7 656.2 510.1 648.3 C507.4 640.0 505.2 630.2 504.9 621.9 C504.6 614.5 506.0 607.8 507.5 600.8 C509.0 593.7 512.1 586.6 514.1 579.7 C516.0 573.0 517.6 566.6 519.4 560.0 L519.4 560.0 C510.2 564.8 501.0 568.5 491.7 574.4 C481.2 581.0 471.2 589.8 460.0 598.2 C447.4 607.7 431.6 619.3 420.0 628.5 C410.7 635.9 403.3 641.3 395.5 648.9 C387.3 657.0 378.3 666.9 372.2 676.0 C366.9 683.9 364.1 692.0 360.0 700.0 L859.0 700.0 C854.9 692.0 852.1 683.9 846.8 676.0 C840.7 666.9 831.7 657.0 823.5 648.9 C815.7 641.3 808.3 635.9 799.0 628.5 C787.4 619.3 771.6 607.7 759.0 598.2 C747.8 589.8 737.8 581.0 727.3 574.4 C718.0 568.5 708.8 564.8 699.6 560.0 L699.6 560.0 C701.4 566.6 703.0 573.0 704.9 579.7 C706.9 586.6 710.0 593.7 711.5 600.8 C713.0 607.8 714.4 614.5 714.1 621.9 C713.8 630.2 711.6 640.0 708.9 648.3 C706.3 656.2 701.8 663.2 698.3 670.7 L698.3 670.7 C693.0 663.2 686.8 655.9 682.5 648.3 C678.6 641.4 675.0 634.6 673.2 627.2 C671.4 619.7 671.5 611.8 672.0 603.5 C672.6 594.3 676.1 583.0 677.2 574.4 C678.0 567.6 679.7 562.0 678.5 556.0 C677.2 549.7 673.3 543.1 669.3 537.5 C665.1 531.6 659.3 526.8 653.5 521.7 C647.1 516.2 639.6 511.0 632.4 505.8 C625.0 500.4 617.1 495.3 609.5 490.0 Z"/>
</g>
<line x1="41" y1="192.5" x2="1091" y2="192.5" stroke="#2d5a5c" stroke-width="1" stroke-dasharray="1.5 2"/>
<path d="M586 217 L586 229 L589 226 L595 225 Z" fill="#111"/>
</svg>
<svg class="a" style="left:11px;top:41px" width="16" height="19" viewBox="0 0 16 19"><path d="M1 0.5H10L15 5.5V18.5H1Z" fill="#ececec"/><path d="M10 0.5V5.5H15Z" fill="#bdbdbd"/></svg>
<svg class="a" style="left:28px;top:56px" width="4" height="4" viewBox="0 0 4 4"><path d="M4 0L4 4L0 4Z" fill="#666"/></svg>
<svg class="a" style="left:36px;top:43px" width="18" height="15" viewBox="0 0 18 15"><path d="M0.5 2.5Q0.5 1 2 1H7L9 3H16Q17.5 3 17.5 4.5V13.5Q17.5 14.5 16.5 14.5H1.5Q0.5 14.5 0.5 13.5Z" fill="#f4d06a"/></svg>
<svg class="a" style="left:61px;top:41px" width="18" height="18" viewBox="0 0 18 18"><rect x="0.5" y="0.5" width="17" height="17" rx="1" fill="#2f7fd8"/><rect x="4" y="1" width="10" height="7" fill="#eaf2fb"/><rect x="4" y="11" width="10" height="6" fill="#eaf2fb"/><rect x="6" y="13" width="2" height="3" fill="#2f7fd8"/></svg>
<div class="a" style="left:84px;top:34px;width:1px;height:29px;background:#5c5c5c"></div>
<svg class="a" style="left:92px;top:41px" width="16" height="18" viewBox="0 0 16 18"><g stroke="#7a7a7a" stroke-width="1.2" fill="none"><path d="M3 0L11 12M13 0L5 12"/><circle cx="4" cy="15" r="2.5"/><circle cx="12" cy="15" r="2.5"/></g></svg>
<svg class="a" style="left:118px;top:42px" width="16" height="17" viewBox="0 0 16 17"><path d="M0 0H8L10 2V12H0Z" fill="#7d7d7d"/><path d="M5 4H12L15 7V16H5Z" fill="#8e8e8e"/></svg>
<svg class="a" style="left:142px;top:41px" width="18" height="18" viewBox="0 0 18 18"><rect x="0" y="2" width="9" height="15" fill="#f2cf6a"/><rect x="3" y="0" width="4" height="3" fill="#d8b65a"/><path d="M8 3H13L17 7V17H8Z" fill="#ededed"/></svg>
<div class="a" style="left:165px;top:34px;width:1px;height:29px;background:#5c5c5c"></div>
<svg class="a" style="left:172px;top:44px" width="18" height="13" viewBox="0 0 18 13"><path d="M3 8 Q6 1 12 2 Q17 3 16 9" stroke="#f2f2f2" stroke-width="2.2" fill="none"/><path d="M0 12L1 4L7 10Z" fill="#f2f2f2"/></svg>
<svg class="a" style="left:198px;top:44px" width="18" height="13" viewBox="0 0 18 13"><path d="M15 8 Q12 1 6 2 Q1 3 2 9" stroke="#8a8a8a" stroke-width="2" fill="none"/><path d="M18 12L17 4L11 10Z" fill="#8a8a8a"/></svg>
<div class="a" style="left:221px;top:34px;width:1px;height:29px;background:#5c5c5c"></div>
<svg class="a" style="left:229px;top:42px" width="15" height="18" viewBox="0 0 15 18"><rect x="0.5" y="1" width="14" height="17" fill="#ededed"/><g stroke="#9a9a9a" stroke-width="1"><path d="M3 5H11M3 8H11M3 11H11M3 14H9"/></g><path d="M2 0.5H13" stroke="#bbb"/></svg>
<div class="a" style="left:444px;top:38px;width:1px;height:24px;background:#5c5c5c"></div>
<svg class="a" style="left:452px;top:41px" width="18" height="18" viewBox="0 0 18 18"><path d="M9 2L16 8L10 14L3 8Z" fill="#6e6e6e"/><circle cx="5" cy="13" r="3" stroke="#555" fill="none"/></svg>
<svg class="a" style="left:481px;top:43px" width="16" height="14" viewBox="0 0 16 14"><ellipse cx="8" cy="3" rx="3" ry="2" stroke="#666" fill="none"/><ellipse cx="8" cy="8" rx="4" ry="2.5" stroke="#666" fill="none"/><path d="M1 10L15 10L12 14H4Z" fill="#4a4a4a"/></svg>
<svg class="a" style="left:503px;top:41px" width="16" height="19" viewBox="0 0 16 19"><rect x="0" y="1" width="5" height="5" fill="#e0533b"/><rect x="6" y="1" width="5" height="5" fill="#4caf50"/><rect x="0" y="7" width="5" height="5" fill="#3a8fe0"/><path d="M9 9V17M6 14L9 17L12 14" stroke="#f0f0f0" stroke-width="1.3" fill="none"/></svg>
<svg class="a" style="left:521px;top:57px" width="4" height="4" viewBox="0 0 4 4"><path d="M4 0L4 4L0 4Z" fill="#666"/></svg>
<div class="a" style="left:547px;top:38px;width:1px;height:24px;background:#5c5c5c"></div>
<svg class="a" style="left:554px;top:42px" width="19" height="17" viewBox="0 0 19 17"><path d="M0.5 2Q0.5 1 1.5 1H6L8 3H15Q16.5 3 16.5 4.5V14.5H0.5Z" fill="#f4d06a"/><path d="M13 7L14.5 10.5L18 11L15.3 13.3L16 17L13 15L10 17L10.7 13.3L8 11L11.5 10.5Z" fill="#333" stroke="#eee" stroke-width="1"/></svg>
<svg class="a" style="left:580px;top:42px" width="18" height="17" viewBox="0 0 18 17"><path d="M1 1L17 8.5L1 16" stroke="#e6e0a0" stroke-width="1.6" fill="none"/></svg>
<svg class="a" style="left:607px;top:41px" width="16" height="18" viewBox="0 0 16 18"><g stroke="#e8e4b0" stroke-width="1.3"><path d="M2 16L15 2M1 9H7M4 6V12M10 3L14 7M12 1V5"/></g><circle cx="11" cy="13" r="2.5" stroke="#eee" fill="none"/></svg>
<svg class="a" style="left:632px;top:42px" width="17" height="17" viewBox="0 0 17 17"><path d="M16 1Q16 13 2 16" stroke="#e6c84a" stroke-width="1.6" fill="none"/><path d="M6 4Q9 2 10 0" stroke="#ddd" fill="none"/><path d="M6 8L10 10L6 12Z" fill="#c8502a"/></svg>
<svg class="a" style="left:656px;top:41px" width="19" height="19" viewBox="0 0 19 19"><g stroke="#f0f0f0" stroke-width="1.3" fill="none"><path d="M9.5 0.5L11 7L17 4L12 9.5L18.5 11L12 12.5L15 18L9.5 14L4 18L7 12.5L0.5 11L7 9.5L2 4L8 7Z"/></g><circle cx="9.5" cy="10" r="1.5" fill="#f0f0f0"/></svg>
<svg class="a" style="left:680px;top:41px" width="21" height="18" viewBox="0 0 21 18"><path d="M10.5 6L20.5 11.5L10.5 17L0.5 11.5Z" fill="#3f9f45"/><path d="M0.5 11.5L10.5 17L20.5 11.5V13L10.5 18L0.5 13Z" fill="#2d7a33"/><ellipse cx="10.5" cy="11" rx="3" ry="1.6" fill="#cfe8c0"/><circle cx="10.5" cy="4" r="2.5" stroke="#e0e0e0" fill="none"/></svg>
<svg class="a" style="left:706px;top:41px" width="21" height="18" viewBox="0 0 21 18"><path d="M1 9L8 4L14 7L20 5L20 13L12 17L1 13Z" fill="#9a9a9a"/><path d="M8 4L8 12M14 7V15" stroke="#d8d8d8"/><path d="M7 2Q11 -1 15 2" stroke="#ccc" fill="none"/></svg>
<svg class="a" style="left:733px;top:41px" width="18" height="18" viewBox="0 0 18 18"><rect x="0.5" y="0.5" width="17" height="17" fill="#f2ece6" stroke="#9c8070"/><path d="M4 4H14V14H9V8H12M4 4V14H7V8" stroke="#8e7060" stroke-width="1.5" fill="none"/></svg>
<svg class="a" style="left:760px;top:41px" width="17" height="18" viewBox="0 0 17 18"><rect x="0" y="0" width="11" height="11" fill="#4caf50"/><rect x="5" y="6" width="12" height="12" fill="#3d9b40"/><path d="M0 5H11M5 0V11M5 12H17M11 6V18" stroke="#7fd07f" stroke-width="1"/></svg>
<svg class="a" style="left:783px;top:41px" width="21" height="18" viewBox="0 0 21 18"><path d="M10.5 6L20.5 11.5L10.5 17L0.5 11.5Z" fill="#f0d63a"/><path d="M0.5 11.5L10.5 17L20.5 11.5V13L10.5 18L0.5 13Z" fill="#c0a020"/><rect x="8.5" y="6" width="4" height="5" fill="#d0b830"/><circle cx="10.5" cy="4" r="2.5" stroke="#e0e0e0" fill="none"/></svg>
<div class="a" style="left:809px;top:38px;width:1px;height:24px;background:#5c5c5c"></div>
<svg class="a" style="left:816px;top:41px" width="19" height="18" viewBox="0 0 19 18"><rect x="6" y="5" width="12" height="12" fill="#a08070"/><path d="M6 2H18M2 6V17" stroke="#eee" stroke-width="1"/><path d="M5 2L7 0.5V3.5ZM19 2L17 0.5V3.5ZM2 5L0.5 7H3.5ZM2 18L0.5 16H3.5Z" fill="#eee"/></svg>
<svg class="a" style="left:835px;top:57px" width="4" height="4" viewBox="0 0 4 4"><path d="M4 0L4 4L0 4Z" fill="#666"/></svg>
<svg class="a" style="left:842px;top:42px" width="19" height="16" viewBox="0 0 19 16"><rect x="0.5" y="1" width="7" height="14" fill="#a08070"/><rect x="10" y="1" width="7" height="14" fill="#e0dcd8"/><path d="M8.8 0V16" stroke="#ddd" stroke-dasharray="1.5 1"/></svg>
<svg class="a" style="left:861px;top:57px" width="4" height="4" viewBox="0 0 4 4"><path d="M4 0L4 4L0 4Z" fill="#666"/></svg>
<svg class="a" style="left:868px;top:44px" width="18" height="12" viewBox="0 0 18 12"><rect x="0" y="0" width="5" height="5" fill="#6a5a52"/><rect x="6" y="0" width="5" height="5" fill="#8a7a72"/><rect x="12" y="0" width="5" height="5" fill="#e8e8e8"/><rect x="0" y="7" width="5" height="5" fill="#777"/><rect x="6" y="7" width="5" height="5" fill="#c8c8c8"/><rect x="12" y="7" width="5" height="5" fill="#f2f2f2"/></svg>
<svg class="a" style="left:896px;top:42px" width="14" height="17" viewBox="0 0 14 17"><path d="M3 16H11M5 16V6L9 2" stroke="#e84a3a" stroke-width="2.2" fill="none"/><path d="M7 1L12 0L14 5L10 7Z" fill="#e84a3a"/><circle cx="11" cy="3" r="1.5" fill="#f8d0c8"/></svg>
<svg class="a" style="left:917px;top:41px" width="21" height="19" viewBox="0 0 21 19"><circle cx="10.5" cy="9.5" r="8.8" stroke="#d8d8e8" stroke-width="1.2" fill="#2c3344"/><circle cx="6" cy="10" r="1.7" fill="#9ab0d8"/><circle cx="10.5" cy="10" r="1.7" fill="#9ab0d8"/><circle cx="15" cy="10" r="1.7" fill="#9ab0d8"/><path d="M13 5L15 6L13 7Z" fill="#ddd"/><path d="M6 13L8 14L6 15Z" fill="#ddd"/></svg>
<div class="a" style="left:943px;top:38px;width:1px;height:24px;background:#5c5c5c"></div>
<svg class="a" style="left:951px;top:42px" width="17" height="17" viewBox="0 0 17 17"><g stroke="#e8d84a" stroke-width="1.3" fill="none"><circle cx="9" cy="3" r="2.3"/><circle cx="14" cy="9" r="2.3"/><circle cx="9" cy="14.5" r="2.3"/></g><circle cx="3" cy="9" r="2.3" stroke="#ddd" stroke-width="1.2" fill="none"/></svg>
<svg class="a" style="left:976px;top:45px" width="19" height="12" viewBox="0 0 19 12"><g fill="#e8d84a"><circle cx="2" cy="2" r="1.4"/><circle cx="6" cy="1.5" r="1.4"/><circle cx="10" cy="2" r="1.4"/><circle cx="14" cy="2.5" r="1.4"/><circle cx="17.5" cy="2" r="1.4"/><circle cx="2" cy="10" r="1.4"/><circle cx="6" cy="9.5" r="1.4"/><circle cx="10" cy="10" r="1.4"/><circle cx="14" cy="10.5" r="1.4"/><circle cx="17.5" cy="10" r="1.4"/></g><path d="M1 6Q5 4 9 6T18 6" stroke="#ddd" fill="none"/></svg>
<svg class="a" style="left:1001px;top:42px" width="21" height="17" viewBox="0 0 21 17"><path d="M3 10L8 3L13 14L18 4" stroke="#e8d84a" stroke-width="1.2" fill="none"/><g stroke="#e8d84a" stroke-width="1.2" fill="#333"><circle cx="3" cy="10" r="2.2"/><circle cx="8" cy="3" r="2.2"/><circle cx="13" cy="14" r="2.2"/><circle cx="18" cy="4" r="2.2"/></g></svg>
<svg class="a" style="left:10px;top:69px" width="18" height="18" viewBox="0 0 18 18"><circle cx="7.5" cy="7.5" r="6.5" stroke="#eee" stroke-width="1.3" fill="none"/><rect x="4" y="4.5" width="7" height="6" stroke="#ccc" stroke-dasharray="1 1" fill="none"/><path d="M12 12L17 17" stroke="#eee" stroke-width="2"/></svg>
<svg class="a" style="left:36px;top:69px" width="18" height="18" viewBox="0 0 18 18"><g stroke="#c8c8c8" stroke-width="1.2" fill="none"><ellipse cx="9" cy="9" rx="8" ry="4" transform="rotate(60 9 9)"/><ellipse cx="9" cy="9" rx="8" ry="4" transform="rotate(-60 9 9)"/><ellipse cx="9" cy="9" rx="4" ry="7"/></g><circle cx="9" cy="9" r="3" fill="#888"/></svg>
<div class="a" style="left:103px;top:66px;width:1px;height:24px;background:#5c5c5c"></div>
<svg class="a" style="left:109px;top:70px" width="20" height="15" viewBox="0 0 20 15"><path d="M10 0.5L19.5 7L10 13.5L0.5 7Z" fill="#2a86e0"/><path d="M0.5 7L10 13.5L19.5 7L19.5 8.2L10 14.7L0.5 8.2Z" fill="#135aa8"/><path d="M10 0.5L19.5 7L10 7Z" fill="#4aa3f0"/></svg>
<svg class="a" style="left:136px;top:69px" width="19" height="16" viewBox="0 0 19 16"><path d="M1 9L12 4L12 1L18 6L12 12L12 9L3 13Z" fill="#e86060"/><path d="M1 9L3 13L5 12L3 9Z" fill="#f5b0b0"/><path d="M4 9L12 6" stroke="#b83a3a"/></svg>
<svg class="a" style="left:153px;top:83px" width="4" height="4" viewBox="0 0 4 4"><path d="M4 0L4 4L0 4Z" fill="#666"/></svg>
<svg class="a" style="left:160px;top:69px" width="21" height="18" viewBox="0 0 21 18"><path d="M10 1L20 11L10 17L0 11Z" fill="#2a80dc"/><path d="M10 1L20 11L10 11Z" fill="#55aaf0"/><path d="M10 1L10 17" stroke="#1860b0"/></svg>
<svg class="a" style="left:186px;top:69px" width="20" height="19" viewBox="0 0 20 19"><path d="M7 1L13 6L7 10L1 6Z" fill="#3a90e8"/><path d="M13 6L19 11L13 15L7 11Z" fill="#2a80dc"/><path d="M7 10L13 15L7 19L1 14Z" fill="#4aa0f0"/></svg>
<svg class="a" style="left:212px;top:72px" width="21" height="14" viewBox="0 0 21 14"><ellipse cx="10.5" cy="7" rx="10" ry="6.5" fill="#e8a820"/><g stroke="#fff080" stroke-width="1.2"><path d="M3 4L15 13M8 1L19 9M2 9L13 1M7 13L18 4"/></g></svg>
<svg class="a" style="left:237px;top:69px" width="21" height="18" viewBox="0 0 21 18"><path d="M10.5 8L20.5 13L10.5 17.5L0.5 13Z" fill="#d8d0c0"/><path d="M10.5 1L16 5L14 11H7L5 5Z" fill="#f0d020"/></svg>
<svg class="a" style="left:262px;top:71px" width="22" height="15" viewBox="0 0 22 15"><path d="M11 3L21.5 8L11 14L0.5 8Z" fill="#e88a20"/><path d="M0.5 8L11 14L21.5 8V9.5L11 15L0.5 9.5Z" fill="#b05a10"/><path d="M7 5L11 2L15 5L11 8Z" fill="#f8b050"/></svg>
<svg class="a" style="left:290px;top:69px" width="20" height="19" viewBox="0 0 20 19"><path d="M0.5 2Q0.5 1 1.5 1H6L8 3H15Q16.5 3 16.5 4.5V15H0.5Z" fill="#f4d78a"/><path d="M13 7L14.5 10.5L18.5 11L15.5 13.5L16.5 17.5L13 15.5L9.5 17.5L10.5 13.5L7.5 11L11.5 10.5Z" fill="#f2e030" stroke="#333" stroke-width="0.8"/></svg>
<svg class="a" style="left:308px;top:85px" width="4" height="4" viewBox="0 0 4 4"><path d="M4 0L4 4L0 4Z" fill="#666"/></svg>
<div class="a" style="left:399px;top:66px;width:1px;height:24px;background:#5c5c5c"></div>
<svg class="a" style="left:405px;top:72px" width="22" height="14" viewBox="0 0 22 14"><path d="M11 0.5L21.5 6L11 11.5L0.5 6Z" fill="#55aaf0"/><path d="M0.5 6L11 11.5L21.5 6V8L11 13.5L0.5 8Z" fill="#1a60b0"/></svg>
<svg class="a" style="left:422px;top:83px" width="4" height="4" viewBox="0 0 4 4"><path d="M4 0L4 4L0 4Z" fill="#666"/></svg>
<svg class="a" style="left:431px;top:71px" width="21" height="15" viewBox="0 0 21 15"><path d="M0.5 7L9 2V12Z" fill="#e8e8e8"/><path d="M9 2L20.5 7L12 13L9 12Z" fill="#2a80dc"/><path d="M9 2L14 7L9 12Z" fill="#55aaf0"/></svg>
<svg class="a" style="left:457px;top:71px" width="21" height="15" viewBox="0 0 21 15"><path d="M10.5 0.5L20.5 6.5L10.5 12.5L0.5 6.5Z" fill="#f0a020"/><path d="M0.5 6.5L10.5 12.5L20.5 6.5V8L10.5 14L0.5 8Z" fill="#c07010"/><g stroke="#ffd070" stroke-width="0.8"><path d="M3 5L13 11M6 3L16 9M9 1.5L18 7M2 8L12 2M5 10L15 4M8 12L18 6"/></g></svg>
<svg class="a" style="left:482px;top:69px" width="21" height="18" viewBox="0 0 21 18"><path d="M10.5 4L20.5 9L10.5 14L0.5 9Z" fill="#2a80dc"/><path d="M0.5 11L10.5 16L20.5 11V13L10.5 18L0.5 13Z" fill="#cfe0f8"/><path d="M10.5 9V1M8 3L10.5 0.5L13 3" stroke="#fff" stroke-width="1.2" fill="none"/></svg>
<svg class="a" style="left:508px;top:69px" width="21" height="18" viewBox="0 0 21 18"><path d="M10.5 6L20.5 11L10.5 16L0.5 11Z" fill="#a8a8e0"/><path d="M0.5 11L10.5 16L20.5 11V12.5L10.5 17.5L0.5 12.5Z" fill="#e0e0f8"/><ellipse cx="10.5" cy="10" rx="4" ry="2" stroke="#e8e8ff" fill="none"/><path d="M5 3Q10 0 14 4" stroke="#e8c040" stroke-width="1.5" fill="none"/></svg>
<svg class="a" style="left:525px;top:85px" width="4" height="4" viewBox="0 0 4 4"><path d="M4 0L4 4L0 4Z" fill="#666"/></svg>
<svg class="a" style="left:534px;top:69px" width="21" height="18" viewBox="0 0 21 18"><path d="M10.5 6L20.5 11L10.5 16L0.5 11Z" fill="#f0d020"/><path d="M0.5 11L10.5 16L20.5 11V12.5L10.5 17.5L0.5 12.5Z" fill="#c0a010"/><ellipse cx="10.5" cy="10.5" rx="2.5" ry="1.5" fill="#333"/><circle cx="10.5" cy="3" r="2.8" fill="#e0502a"/></svg>
<svg class="a" style="left:551px;top:85px" width="4" height="4" viewBox="0 0 4 4"><path d="M4 0L4 4L0 4Z" fill="#666"/></svg>
<svg class="a" style="left:560px;top:69px" width="19" height="17" viewBox="0 0 19 17"><path d="M9.5 7L18.5 12L9.5 16.5L0.5 12Z" fill="#555"/><ellipse cx="9.5" cy="4" rx="3" ry="2.5" stroke="#5a5a5a" fill="none"/><ellipse cx="9.5" cy="11" rx="2" ry="1.2" fill="#333"/></svg>
<svg class="a" style="left:590px;top:72px" width="9" height="12" viewBox="0 0 9 12"><ellipse cx="4.5" cy="2" rx="3" ry="1.8" stroke="#5a5a5a" fill="none"/><path d="M2 5V9M7 5V9" stroke="#555"/><ellipse cx="4.5" cy="9" rx="3" ry="1.8" stroke="#5a5a5a" fill="none"/></svg>
<svg class="a" style="left:610px;top:71px" width="21" height="15" viewBox="0 0 21 15"><path d="M10.5 3L20.5 8L10.5 14L0.5 8Z" fill="#2a80dc"/><path d="M0.5 8L10 2.5L14 4.5L4 10Z" fill="#f0f0f0"/></svg>
<svg class="a" style="left:636px;top:69px" width="21" height="19" viewBox="0 0 21 19"><path d="M3 3Q8 0 14 3L20 6L12 11L2 6Z" fill="#4aa0f0"/><path d="M0.5 12L10.5 17L20.5 12V14L10.5 19L0.5 14Z" fill="#e8e8e8"/><path d="M2 10L10.5 14.5L19 10" stroke="#ddd" fill="none"/></svg>
<svg class="a" style="left:661px;top:70px" width="21" height="17" viewBox="0 0 21 17"><path d="M5 1L20 6L16 16L1 11Z" fill="#2a86e0"/><path d="M5 1L20 6L18 8L3 4Z" fill="#6ab8f8"/></svg>
<svg class="a" style="left:690px;top:69px" width="15" height="19" viewBox="0 0 15 19"><path d="M7.5 0L9 3.5L13 4L10 6.5L11 10L7.5 8L4 10L5 6.5L2 4L6 3.5Z" fill="#2a80dc"/><circle cx="7.5" cy="14.5" r="6" fill="#ddd"/><path d="M7.5 11L8.5 13.5L11 14L9 15.5L9.5 18L7.5 16.5L5.5 18L6 15.5L4 14L6.5 13.5Z" fill="#333"/></svg>
<svg class="a" style="left:713px;top:72px" width="21" height="14" viewBox="0 0 21 14"><path d="M10.5 1L20.5 7L10.5 13L0.5 7Z" fill="#1a5fb0"/><path d="M10.5 1L16 4.5L10.5 8L5 4.5Z" fill="#f0f0f0"/></svg>
<svg class="a" style="left:738px;top:69px" width="21" height="19" viewBox="0 0 21 19"><path d="M10.5 1L20.5 6L10.5 11L0.5 6Z" fill="#e8e8e8"/><path d="M0.5 9L10.5 14L20.5 9V10.5L10.5 15.5L0.5 10.5Z" fill="#c8c8c8"/><path d="M0.5 12.5L10.5 17.5L20.5 12.5V14.5L10.5 19L0.5 14.5Z" fill="#e0c040"/><path d="M10.5 3V8M8 5.5H13" stroke="#888"/></svg>
<div class="a" style="left:764px;top:66px;width:1px;height:24px;background:#5c5c5c"></div>
<svg class="a" style="left:772px;top:70px" width="18" height="17" viewBox="0 0 18 17"><rect x="0.5" y="0.5" width="17" height="16" fill="#8ad878"/><path d="M9 3V14M3.5 8.5H14.5" stroke="#1a7a1a" stroke-width="3.2"/></svg>
<svg class="a" style="left:795px;top:69px" width="21" height="19" viewBox="0 0 21 19"><ellipse cx="10.5" cy="13" rx="10" ry="6" fill="#2a7ad8"/><path d="M4 12Q10.5 15 17 12" stroke="#9ad0f8" fill="none"/><circle cx="10.5" cy="4" r="2.8" stroke="#e8e8e8" stroke-width="1.2" fill="none"/><rect x="8" y="6.5" width="5" height="2" fill="#2a7ad8"/></svg>
<svg class="a" style="left:822px;top:69px" width="19" height="19" viewBox="0 0 19 19"><circle cx="9.5" cy="9.5" r="8.5" fill="#4a3030"/><g stroke="#f0e0e0" stroke-width="1.1"><path d="M2 13L13 2M4 16L16 4M7 18L18 7M1 9L9 1"/></g><path d="M9.5 4L11 8L15 8.5L12 11L13 15L9.5 13L6 15L7 11L4 8.5L8 8Z" fill="#c03030"/></svg>
<svg class="a" style="left:839px;top:85px" width="4" height="4" viewBox="0 0 4 4"><path d="M4 0L4 4L0 4Z" fill="#666"/></svg>
<svg class="a" style="left:846px;top:70px" width="22" height="16" viewBox="0 0 22 16"><path d="M1 1Q6 8 1 15M9 1Q4 8 9 15" stroke="#d8d8d8" stroke-width="1.3" fill="none"/><path d="M10 8H16M14 5.5L17 8L14 10.5" stroke="#e05030" stroke-width="1.5" fill="none"/><path d="M16 1Q22 8 16 15" stroke="#e8d040" stroke-width="1.5" fill="none"/></svg>
<svg class="a" style="left:865px;top:85px" width="4" height="4" viewBox="0 0 4 4"><path d="M4 0L4 4L0 4Z" fill="#666"/></svg>
<svg class="a" style="left:875px;top:69px" width="17" height="19" viewBox="0 0 17 19"><path d="M1 18V9Q1 1 8.5 1Q16 1 16 9V18" stroke="#d8d8d8" stroke-width="1.3" fill="none"/><path d="M8.5 0V19" stroke="#d88a40" stroke-width="1.2" stroke-dasharray="3 1.5"/></svg>
<svg class="a" style="left:899px;top:70px" width="20" height="18" viewBox="0 0 20 18"><circle cx="10" cy="9" r="8" stroke="#505050" stroke-width="1.2" stroke-dasharray="1.5 2" fill="none"/><rect x="6" y="5" width="8" height="8" fill="#4e4e4e"/></svg>
<svg class="a" style="left:915px;top:85px" width="4" height="4" viewBox="0 0 4 4"><path d="M4 0L4 4L0 4Z" fill="#555"/></svg>
<svg class="a" style="left:930px;top:71px" width="16" height="15" viewBox="0 0 16 15"><path d="M1 13V6Q3 1 9 1H14V13Z" stroke="#555" stroke-width="1.1" fill="none"/></svg>
<svg class="a" style="left:942px;top:85px" width="4" height="4" viewBox="0 0 4 4"><path d="M4 0L4 4L0 4Z" fill="#555"/></svg>
<svg class="a" style="left:950px;top:71px" width="19" height="15" viewBox="0 0 19 15"><path d="M1 1H12Q18 4 18 7.5Q18 11 12 14H1" stroke="#555" stroke-width="1.1" fill="none"/></svg>
<svg class="a" style="left:965px;top:85px" width="4" height="4" viewBox="0 0 4 4"><path d="M4 0L4 4L0 4Z" fill="#555"/></svg>
<svg class="a" style="left:975px;top:71px" width="20" height="15" viewBox="0 0 20 15"><rect x="1" y="1" width="18" height="13" rx="3" stroke="#555" stroke-width="1.1" fill="none"/></svg>
<svg class="a" style="left:992px;top:85px" width="4" height="4" viewBox="0 0 4 4"><path d="M4 0L4 4L0 4Z" fill="#555"/></svg>
<svg class="a" style="left:1002px;top:69px" width="19" height="18" viewBox="0 0 19 18"><rect x="1" y="1" width="17" height="16" stroke="#555" stroke-width="1.1" fill="none"/><circle cx="9.5" cy="9" r="1" fill="#666"/></svg>
<svg class="a" style="left:1017px;top:85px" width="4" height="4" viewBox="0 0 4 4"><path d="M4 0L4 4L0 4Z" fill="#555"/></svg>
<svg class="a" style="left:28px;top:92px" width="142" height="16" viewBox="0 0 142 16"><path d="M1 15 L9 1.3 H102.5 L109 15Z" fill="#555555" stroke="#6a6a6a" stroke-width="0.8"/><path d="M108.5 15 L116 1.3 H134 L139.5 15" fill="none" stroke="#5e5e5e" stroke-width="0.9"/></svg>
<div class="a" style="left:37px;top:96px;font-size:7.4px;line-height:9px;font-weight:bold;color:#ececec;white-space:nowrap">2D Вид - Растровый слой</div>
<div class="a" style="left:137.5px;top:96px;font-size:7.5px;line-height:9px;color:#a8a8a8;white-space:nowrap">3D вид</div>
<svg class="a" style="left:1070px;top:95px" width="20" height="10" viewBox="0 0 20 10"><path d="M1 3H8L4.5 7Z" fill="#eeeeee"/><path d="M12 1.5L18 7.5M18 1.5L12 7.5" stroke="#e6e6e6" stroke-width="1.2"/></svg>
<div class="a" style="left:30px;top:109px;width:1px;height:24px;background:#555"></div>
<svg class="a" style="left:37px;top:112px" width="18" height="18" viewBox="0 0 18 18"><g stroke="#e6e6e6" stroke-width="1.3" fill="none"><circle cx="7.5" cy="7.5" r="6.6"/><path d="M12.3 12.3L16.8 16.8" stroke-width="2"/><path d="M7.5 3.8V11.2M3.8 7.5H11.2" stroke-width="1.5"/></g></svg>
<svg class="a" style="left:63px;top:112px" width="18" height="18" viewBox="0 0 18 18"><g stroke="#e6e6e6" stroke-width="1.3" fill="none"><circle cx="7.5" cy="7.5" r="6.6"/><path d="M12.3 12.3L16.8 16.8" stroke-width="2"/><path d="M3.8 7.5H11.2" stroke-width="1.5"/></g></svg>
<svg class="a" style="left:89px;top:112px" width="18" height="18" viewBox="0 0 18 18"><g stroke="#e6e6e6" stroke-width="1.3" fill="none"><circle cx="7.5" cy="7.5" r="6.6"/><path d="M12.3 12.3L16.8 16.8" stroke-width="2"/><path d="M4.5 9Q5 4.5 8.5 4.5Q11 5 10.5 8" stroke-width="1.1"/><path d="M3.5 7.5L4.5 10.5L7 8.8" stroke-width="1.1"/></g></svg>
<div class="a" style="left:112px;top:108px;width:1px;height:25px;background:#4c4c4c"></div>
<svg class="a" style="left:117px;top:112px" width="18" height="18" viewBox="0 0 18 18"><g stroke="#e6e6e6" stroke-width="1.3" fill="none"><circle cx="7.5" cy="7.5" r="6.6"/><path d="M12.3 12.3L16.8 16.8" stroke-width="2"/><text x="7.5" y="9.8" font-size="6.5" text-anchor="middle" fill="#e6e6e6" stroke="none" font-family="Liberation Sans">1:1</text></g></svg>
<svg class="a" style="left:144px;top:112px" width="18" height="18" viewBox="0 0 18 18"><g stroke="#e6e6e6" stroke-width="1.3" fill="none"><circle cx="7.5" cy="7.5" r="6.6"/><path d="M12.3 12.3L16.8 16.8" stroke-width="2"/><rect x="4" y="5" width="7" height="5" stroke-width="1.1"/></g></svg>
<svg class="a" style="left:170px;top:112px" width="18" height="18" viewBox="0 0 18 18"><g stroke="#5c5c5c" stroke-width="1.3" fill="none"><circle cx="7.5" cy="7.5" r="6.6"/><path d="M12.3 12.3L16.8 16.8" stroke-width="2"/><path d="M5 5L10 10M10 5L5 10" stroke-width="0.9"/><circle cx="7.5" cy="7.5" r="1" /></g></svg>
<div class="a" style="left:193px;top:108px;width:1px;height:25px;background:#4c4c4c"></div>
<div class="a" style="left:196px;top:109px;width:25px;height:24px;background:#191919;border:1px solid #3c3c3c"></div>
<svg class="a" style="left:200px;top:112px" width="18" height="18" viewBox="0 0 18 18"><path d="M7 1L8.8 5.2L13.3 5.6L9.9 8.5L10.9 12.9L7 10.6L3.1 12.9L4.1 8.5L0.7 5.6L5.2 5.2Z" fill="#f2d43a"/><circle cx="11" cy="11" r="3.6" stroke="#d8d8c0" stroke-width="1.3" fill="#222"/><circle cx="11" cy="11" r="1.2" fill="#d8d8c0"/><path d="M13.5 13.5L16.5 16.5" stroke="#d8d8c0" stroke-width="1.5"/></svg>
<div class="a" style="left:226px;top:119.5px;width:64px;height:3px;background:#f0f0f0"></div>
<div class="a" style="left:289.5px;top:115px;width:4.5px;height:12px;background:#f0f0f0"></div>
<svg class="a" style="left:30px;top:136px" width="10" height="11" viewBox="0 0 10 11"><rect x="0" y="0" width="10" height="11" fill="#0c0c0c"/><g fill="#8a8a8a"><rect x="5" y="1.5" width="1" height="1.5"/><rect x="8" y="1.5" width="1" height="1.5"/><rect x="5" y="4" width="1" height="1"/><rect x="8" y="4" width="1" height="1"/><rect x="0" y="5.5" width="2" height="0.8"/><rect x="3" y="5.5" width="2" height="0.8"/><rect x="6" y="5.5" width="2" height="0.8"/><rect x="5" y="7.5" width="1" height="1.5"/><rect x="8" y="7.5" width="1" height="1.5"/></g></svg>
<svg class="a" style="left:41px;top:134px" width="1050" height="14" viewBox="0 0 1050 14"><g transform="translate(0,-134)"><path d="M6.5 144.8V148" stroke="#d8d8d8" stroke-width="0.9"/><path d="M9.2 146.6V148" stroke="#a8a8a8" stroke-width="0.8"/><path d="M11.9 146V148" stroke="#c0c0c0" stroke-width="0.8"/><path d="M14.5 146.6V148" stroke="#a8a8a8" stroke-width="0.8"/><path d="M17.2 146V148" stroke="#c0c0c0" stroke-width="0.8"/><path d="M19.9 146.6V148" stroke="#a8a8a8" stroke-width="0.8"/><path d="M22.6 146V148" stroke="#c0c0c0" stroke-width="0.8"/><path d="M25.3 146.6V148" stroke="#a8a8a8" stroke-width="0.8"/><path d="M27.9 146V148" stroke="#c0c0c0" stroke-width="0.8"/><path d="M30.6 146.6V148" stroke="#a8a8a8" stroke-width="0.8"/><path d="M33.3 144.8V148" stroke="#d8d8d8" stroke-width="0.9"/><path d="M36.0 146.6V148" stroke="#a8a8a8" stroke-width="0.8"/><path d="M38.7 146V148" stroke="#c0c0c0" stroke-width="0.8"/><path d="M41.3 146.6V148" stroke="#a8a8a8" stroke-width="0.8"/><path d="M44.0 146V148" stroke="#c0c0c0" stroke-width="0.8"/><path d="M46.7 146.6V148" stroke="#a8a8a8" stroke-width="0.8"/><path d="M49.4 146V148" stroke="#c0c0c0" stroke-width="0.8"/><path d="M52.1 146.6V148" stroke="#a8a8a8" stroke-width="0.8"/><path d="M54.7 146V148" stroke="#c0c0c0" stroke-width="0.8"/><path d="M57.4 146.6V148" stroke="#a8a8a8" stroke-width="0.8"/><path d="M60.1 144.8V148" stroke="#d8d8d8" stroke-width="0.9"/><path d="M62.8 146.6V148" stroke="#a8a8a8" stroke-width="0.8"/><path d="M65.5 146V148" stroke="#c0c0c0" stroke-width="0.8"/><path d="M68.1 146.6V148" stroke="#a8a8a8" stroke-width="0.8"/><path d="M70.8 146V148" stroke="#c0c0c0" stroke-width="0.8"/><path d="M73.5 146.6V148" stroke="#a8a8a8" stroke-width="0.8"/><path d="M76.2 146V148" stroke="#c0c0c0" stroke-width="0.8"/><path d="M78.9 146.6V148" stroke="#a8a8a8" stroke-width="0.8"/><path d="M81.5 146V148" stroke="#c0c0c0" stroke-width="0.8"/><path d="M84.2 146.6V148" stroke="#a8a8a8" stroke-width="0.8"/><path d="M86.9 144.8V148" stroke="#d8d8d8" stroke-width="0.9"/><path d="M89.6 146.6V148" stroke="#a8a8a8" stroke-width="0.8"/><path d="M92.3 146V148" stroke="#c0c0c0" stroke-width="0.8"/><path d="M94.9 146.6V148" stroke="#a8a8a8" stroke-width="0.8"/><path d="M97.6 146V148" stroke="#c0c0c0" stroke-width="0.8"/><path d="M100.3 146.6V148" stroke="#a8a8a8" stroke-width="0.8"/><path d="M103.0 146V148" stroke="#c0c0c0" stroke-width="0.8"/><path d="M105.7 146.6V148" stroke="#a8a8a8" stroke-width="0.8"/><path d="M108.3 146V148" stroke="#c0c0c0" stroke-width="0.8"/><path d="M111.0 146.6V148" stroke="#a8a8a8" stroke-width="0.8"/><path d="M113.7 144.8V148" stroke="#d8d8d8" stroke-width="0.9"/><path d="M116.4 146.6V148" stroke="#a8a8a8" stroke-width="0.8"/><path d="M119.1 146V148" stroke="#c0c0c0" stroke-width="0.8"/><path d="M121.7 146.6V148" stroke="#a8a8a8" stroke-width="0.8"/><path d="M124.4 146V148" stroke="#c0c0c0" stroke-width="0.8"/><path d="M127.1 146.6V148" stroke="#a8a8a8" stroke-width="0.8"/><path d="M129.8 146V148" stroke="#c0c0c0" stroke-width="0.8"/><path d="M132.5 146.6V148" stroke="#a8a8a8" stroke-width="0.8"/><path d="M135.1 146V148" stroke="#c0c0c0" stroke-width="0.8"/><path d="M137.8 146.6V148" stroke="#a8a8a8" stroke-width="0.8"/><path d="M140.5 144.8V148" stroke="#d8d8d8" stroke-width="0.9"/><path d="M143.2 146.6V148" stroke="#a8a8a8" stroke-width="0.8"/><path d="M145.9 146V148" stroke="#c0c0c0" stroke-width="0.8"/><path d="M148.5 146.6V148" stroke="#a8a8a8" stroke-width="0.8"/><path d="M151.2 146V148" stroke="#c0c0c0" stroke-width="0.8"/><path d="M153.9 146.6V148" stroke="#a8a8a8" stroke-width="0.8"/><path d="M156.6 146V148" stroke="#c0c0c0" stroke-width="0.8"/><path d="M159.3 146.6V148" stroke="#a8a8a8" stroke-width="0.8"/><path d="M161.9 146V148" stroke="#c0c0c0" stroke-width="0.8"/><path d="M164.6 146.6V148" stroke="#a8a8a8" stroke-width="0.8"/><path d="M167.3 144.8V148" stroke="#d8d8d8" stroke-width="0.9"/><path d="M170.0 146.6V148" stroke="#a8a8a8" stroke-width="0.8"/><path d="M172.7 146V148" stroke="#c0c0c0" stroke-width="0.8"/><path d="M175.3 146.6V148" stroke="#a8a8a8" stroke-width="0.8"/><path d="M178.0 146V148" stroke="#c0c0c0" stroke-width="0.8"/><path d="M180.7 146.6V148" stroke="#a8a8a8" stroke-width="0.8"/><path d="M183.4 146V148" stroke="#c0c0c0" stroke-width="0.8"/><path d="M186.1 146.6V148" stroke="#a8a8a8" stroke-width="0.8"/><path d="M188.7 146V148" stroke="#c0c0c0" stroke-width="0.8"/><path d="M191.4 146.6V148" stroke="#a8a8a8" stroke-width="0.8"/><path d="M194.1 144.8V148" stroke="#d8d8d8" stroke-width="0.9"/><path d="M196.8 146.6V148" stroke="#a8a8a8" stroke-width="0.8"/><path d="M199.5 146V148" stroke="#c0c0c0" stroke-width="0.8"/><path d="M202.1 146.6V148" stroke="#a8a8a8" stroke-width="0.8"/><path d="M204.8 146V148" stroke="#c0c0c0" stroke-width="0.8"/><path d="M207.5 146.6V148" stroke="#a8a8a8" stroke-width="0.8"/><path d="M210.2 146V148" stroke="#c0c0c0" stroke-width="0.8"/><path d="M212.9 146.6V148" stroke="#a8a8a8" stroke-width="0.8"/><path d="M215.5 146V148" stroke="#c0c0c0" stroke-width="0.8"/><path d="M218.2 146.6V148" stroke="#a8a8a8" stroke-width="0.8"/><path d="M220.9 144.8V148" stroke="#d8d8d8" stroke-width="0.9"/><path d="M223.6 146.6V148" stroke="#a8a8a8" stroke-width="0.8"/><path d="M226.3 146V148" stroke="#c0c0c0" stroke-width="0.8"/><path d="M228.9 146.6V148" stroke="#a8a8a8" stroke-width="0.8"/><path d="M231.6 146V148" stroke="#c0c0c0" stroke-width="0.8"/><path d="M234.3 146.6V148" stroke="#a8a8a8" stroke-width="0.8"/><path d="M237.0 146V148" stroke="#c0c0c0" stroke-width="0.8"/><path d="M239.7 146.6V148" stroke="#a8a8a8" stroke-width="0.8"/><path d="M242.3 146V148" stroke="#c0c0c0" stroke-width="0.8"/><path d="M245.0 146.6V148" stroke="#a8a8a8" stroke-width="0.8"/><path d="M247.7 144.8V148" stroke="#d8d8d8" stroke-width="0.9"/><path d="M250.4 146.6V148" stroke="#a8a8a8" stroke-width="0.8"/><path d="M253.1 146V148" stroke="#c0c0c0" stroke-width="0.8"/><path d="M255.7 146.6V148" stroke="#a8a8a8" stroke-width="0.8"/><path d="M258.4 146V148" stroke="#c0c0c0" stroke-width="0.8"/><path d="M261.1 146.6V148" stroke="#a8a8a8" stroke-width="0.8"/><path d="M263.8 146V148" stroke="#c0c0c0" stroke-width="0.8"/><path d="M266.5 146.6V148" stroke="#a8a8a8" stroke-width="0.8"/><path d="M269.1 146V148" stroke="#c0c0c0" stroke-width="0.8"/><path d="M271.8 146.6V148" stroke="#a8a8a8" stroke-width="0.8"/><path d="M274.5 144.8V148" stroke="#d8d8d8" stroke-width="0.9"/><path d="M277.2 146.6V148" stroke="#a8a8a8" stroke-width="0.8"/><path d="M279.9 146V148" stroke="#c0c0c0" stroke-width="0.8"/><path d="M282.5 146.6V148" stroke="#a8a8a8" stroke-width="0.8"/><path d="M285.2 146V148" stroke="#c0c0c0" stroke-width="0.8"/><path d="M287.9 146.6V148" stroke="#a8a8a8" stroke-width="0.8"/><path d="M290.6 146V148" stroke="#c0c0c0" stroke-width="0.8"/><path d="M293.3 146.6V148" stroke="#a8a8a8" stroke-width="0.8"/><path d="M295.9 146V148" stroke="#c0c0c0" stroke-width="0.8"/><path d="M298.6 146.6V148" stroke="#a8a8a8" stroke-width="0.8"/><path d="M301.3 144.8V148" stroke="#d8d8d8" stroke-width="0.9"/><path d="M304.0 146.6V148" stroke="#a8a8a8" stroke-width="0.8"/><path d="M306.7 146V148" stroke="#c0c0c0" stroke-width="0.8"/><path d="M309.3 146.6V148" stroke="#a8a8a8" stroke-width="0.8"/><path d="M312.0 146V148" stroke="#c0c0c0" stroke-width="0.8"/><path d="M314.7 146.6V148" stroke="#a8a8a8" stroke-width="0.8"/><path d="M317.4 146V148" stroke="#c0c0c0" stroke-width="0.8"/><path d="M320.1 146.6V148" stroke="#a8a8a8" stroke-width="0.8"/><path d="M322.7 146V148" stroke="#c0c0c0" stroke-width="0.8"/><path d="M325.4 146.6V148" stroke="#a8a8a8" stroke-width="0.8"/><path d="M328.1 144.8V148" stroke="#d8d8d8" stroke-width="0.9"/><path d="M330.8 146.6V148" stroke="#a8a8a8" stroke-width="0.8"/><path d="M333.5 146V148" stroke="#c0c0c0" stroke-width="0.8"/><path d="M336.1 146.6V148" stroke="#a8a8a8" stroke-width="0.8"/><path d="M338.8 146V148" stroke="#c0c0c0" stroke-width="0.8"/><path d="M341.5 146.6V148" stroke="#a8a8a8" stroke-width="0.8"/><path d="M344.2 146V148" stroke="#c0c0c0" stroke-width="0.8"/><path d="M346.9 146.6V148" stroke="#a8a8a8" stroke-width="0.8"/><path d="M349.5 146V148" stroke="#c0c0c0" stroke-width="0.8"/><path d="M352.2 146.6V148" stroke="#a8a8a8" stroke-width="0.8"/><path d="M354.9 144.8V148" stroke="#d8d8d8" stroke-width="0.9"/><path d="M357.6 146.6V148" stroke="#a8a8a8" stroke-width="0.8"/><path d="M360.3 146V148" stroke="#c0c0c0" stroke-width="0.8"/><path d="M362.9 146.6V148" stroke="#a8a8a8" stroke-width="0.8"/><path d="M365.6 146V148" stroke="#c0c0c0" stroke-width="0.8"/><path d="M368.3 146.6V148" stroke="#a8a8a8" stroke-width="0.8"/><path d="M371.0 146V148" stroke="#c0c0c0" stroke-width="0.8"/><path d="M373.7 146.6V148" stroke="#a8a8a8" stroke-width="0.8"/><path d="M376.3 146V148" stroke="#c0c0c0" stroke-width="0.8"/><path d="M379.0 146.6V148" stroke="#a8a8a8" stroke-width="0.8"/><path d="M381.7 144.8V148" stroke="#d8d8d8" stroke-width="0.9"/><path d="M384.4 146.6V148" stroke="#a8a8a8" stroke-width="0.8"/><path d="M387.1 146V148" stroke="#c0c0c0" stroke-width="0.8"/><path d="M389.7 146.6V148" stroke="#a8a8a8" stroke-width="0.8"/><path d="M392.4 146V148" stroke="#c0c0c0" stroke-width="0.8"/><path d="M395.1 146.6V148" stroke="#a8a8a8" stroke-width="0.8"/><path d="M397.8 146V148" stroke="#c0c0c0" stroke-width="0.8"/><path d="M400.5 146.6V148" stroke="#a8a8a8" stroke-width="0.8"/><path d="M403.1 146V148" stroke="#c0c0c0" stroke-width="0.8"/><path d="M405.8 146.6V148" stroke="#a8a8a8" stroke-width="0.8"/><path d="M408.5 144.8V148" stroke="#d8d8d8" stroke-width="0.9"/><path d="M411.2 146.6V148" stroke="#a8a8a8" stroke-width="0.8"/><path d="M413.9 146V148" stroke="#c0c0c0" stroke-width="0.8"/><path d="M416.5 146.6V148" stroke="#a8a8a8" stroke-width="0.8"/><path d="M419.2 146V148" stroke="#c0c0c0" stroke-width="0.8"/><path d="M421.9 146.6V148" stroke="#a8a8a8" stroke-width="0.8"/><path d="M424.6 146V148" stroke="#c0c0c0" stroke-width="0.8"/><path d="M427.3 146.6V148" stroke="#a8a8a8" stroke-width="0.8"/><path d="M429.9 146V148" stroke="#c0c0c0" stroke-width="0.8"/><path d="M432.6 146.6V148" stroke="#a8a8a8" stroke-width="0.8"/><path d="M435.3 144.8V148" stroke="#d8d8d8" stroke-width="0.9"/><path d="M438.0 146.6V148" stroke="#a8a8a8" stroke-width="0.8"/><path d="M440.7 146V148" stroke="#c0c0c0" stroke-width="0.8"/><path d="M443.3 146.6V148" stroke="#a8a8a8" stroke-width="0.8"/><path d="M446.0 146V148" stroke="#c0c0c0" stroke-width="0.8"/><path d="M448.7 146.6V148" stroke="#a8a8a8" stroke-width="0.8"/><path d="M451.4 146V148" stroke="#c0c0c0" stroke-width="0.8"/><path d="M454.1 146.6V148" stroke="#a8a8a8" stroke-width="0.8"/><path d="M456.7 146V148" stroke="#c0c0c0" stroke-width="0.8"/><path d="M459.4 146.6V148" stroke="#a8a8a8" stroke-width="0.8"/><path d="M462.1 144.8V148" stroke="#d8d8d8" stroke-width="0.9"/><path d="M464.8 146.6V148" stroke="#a8a8a8" stroke-width="0.8"/><path d="M467.5 146V148" stroke="#c0c0c0" stroke-width="0.8"/><path d="M470.1 146.6V148" stroke="#a8a8a8" stroke-width="0.8"/><path d="M472.8 146V148" stroke="#c0c0c0" stroke-width="0.8"/><path d="M475.5 146.6V148" stroke="#a8a8a8" stroke-width="0.8"/><path d="M478.2 146V148" stroke="#c0c0c0" stroke-width="0.8"/><path d="M480.9 146.6V148" stroke="#a8a8a8" stroke-width="0.8"/><path d="M483.5 146V148" stroke="#c0c0c0" stroke-width="0.8"/><path d="M486.2 146.6V148" stroke="#a8a8a8" stroke-width="0.8"/><path d="M488.9 144.8V148" stroke="#d8d8d8" stroke-width="0.9"/><path d="M491.6 146.6V148" stroke="#a8a8a8" stroke-width="0.8"/><path d="M494.3 146V148" stroke="#c0c0c0" stroke-width="0.8"/><path d="M496.9 146.6V148" stroke="#a8a8a8" stroke-width="0.8"/><path d="M499.6 146V148" stroke="#c0c0c0" stroke-width="0.8"/><path d="M502.3 146.6V148" stroke="#a8a8a8" stroke-width="0.8"/><path d="M505.0 146V148" stroke="#c0c0c0" stroke-width="0.8"/><path d="M507.7 146.6V148" stroke="#a8a8a8" stroke-width="0.8"/><path d="M510.3 146V148" stroke="#c0c0c0" stroke-width="0.8"/><path d="M513.0 146.6V148" stroke="#a8a8a8" stroke-width="0.8"/><path d="M515.7 144.8V148" stroke="#d8d8d8" stroke-width="0.9"/><path d="M518.4 146.6V148" stroke="#a8a8a8" stroke-width="0.8"/><path d="M521.1 146V148" stroke="#c0c0c0" stroke-width="0.8"/><path d="M523.7 146.6V148" stroke="#a8a8a8" stroke-width="0.8"/><path d="M526.4 146V148" stroke="#c0c0c0" stroke-width="0.8"/><path d="M529.1 146.6V148" stroke="#a8a8a8" stroke-width="0.8"/><path d="M531.8 146V148" stroke="#c0c0c0" stroke-width="0.8"/><path d="M534.5 146.6V148" stroke="#a8a8a8" stroke-width="0.8"/><path d="M537.1 146V148" stroke="#c0c0c0" stroke-width="0.8"/><path d="M539.8 146.6V148" stroke="#a8a8a8" stroke-width="0.8"/><path d="M542.5 144.8V148" stroke="#d8d8d8" stroke-width="0.9"/><path d="M545.2 146.6V148" stroke="#a8a8a8" stroke-width="0.8"/><path d="M547.9 146V148" stroke="#c0c0c0" stroke-width="0.8"/><path d="M550.5 146.6V148" stroke="#a8a8a8" stroke-width="0.8"/><path d="M553.2 146V148" stroke="#c0c0c0" stroke-width="0.8"/><path d="M555.9 146.6V148" stroke="#a8a8a8" stroke-width="0.8"/><path d="M558.6 146V148" stroke="#c0c0c0" stroke-width="0.8"/><path d="M561.3 146.6V148" stroke="#a8a8a8" stroke-width="0.8"/><path d="M563.9 146V148" stroke="#c0c0c0" stroke-width="0.8"/><path d="M566.6 146.6V148" stroke="#a8a8a8" stroke-width="0.8"/><path d="M569.3 144.8V148" stroke="#d8d8d8" stroke-width="0.9"/><path d="M572.0 146.6V148" stroke="#a8a8a8" stroke-width="0.8"/><path d="M574.7 146V148" stroke="#c0c0c0" stroke-width="0.8"/><path d="M577.3 146.6V148" stroke="#a8a8a8" stroke-width="0.8"/><path d="M580.0 146V148" stroke="#c0c0c0" stroke-width="0.8"/><path d="M582.7 146.6V148" stroke="#a8a8a8" stroke-width="0.8"/><path d="M585.4 146V148" stroke="#c0c0c0" stroke-width="0.8"/><path d="M588.1 146.6V148" stroke="#a8a8a8" stroke-width="0.8"/><path d="M590.7 146V148" stroke="#c0c0c0" stroke-width="0.8"/><path d="M593.4 146.6V148" stroke="#a8a8a8" stroke-width="0.8"/><path d="M596.1 144.8V148" stroke="#d8d8d8" stroke-width="0.9"/><path d="M598.8 146.6V148" stroke="#a8a8a8" stroke-width="0.8"/><path d="M601.5 146V148" stroke="#c0c0c0" stroke-width="0.8"/><path d="M604.1 146.6V148" stroke="#a8a8a8" stroke-width="0.8"/><path d="M606.8 146V148" stroke="#c0c0c0" stroke-width="0.8"/><path d="M609.5 146.6V148" stroke="#a8a8a8" stroke-width="0.8"/><path d="M612.2 146V148" stroke="#c0c0c0" stroke-width="0.8"/><path d="M614.9 146.6V148" stroke="#a8a8a8" stroke-width="0.8"/><path d="M617.5 146V148" stroke="#c0c0c0" stroke-width="0.8"/><path d="M620.2 146.6V148" stroke="#a8a8a8" stroke-width="0.8"/><path d="M622.9 144.8V148" stroke="#d8d8d8" stroke-width="0.9"/><path d="M625.6 146.6V148" stroke="#a8a8a8" stroke-width="0.8"/><path d="M628.3 146V148" stroke="#c0c0c0" stroke-width="0.8"/><path d="M630.9 146.6V148" stroke="#a8a8a8" stroke-width="0.8"/><path d="M633.6 146V148" stroke="#c0c0c0" stroke-width="0.8"/><path d="M636.3 146.6V148" stroke="#a8a8a8" stroke-width="0.8"/><path d="M639.0 146V148" stroke="#c0c0c0" stroke-width="0.8"/><path d="M641.7 146.6V148" stroke="#a8a8a8" stroke-width="0.8"/><path d="M644.3 146V148" stroke="#c0c0c0" stroke-width="0.8"/><path d="M647.0 146.6V148" stroke="#a8a8a8" stroke-width="0.8"/><path d="M649.7 144.8V148" stroke="#d8d8d8" stroke-width="0.9"/><path d="M652.4 146.6V148" stroke="#a8a8a8" stroke-width="0.8"/><path d="M655.1 146V148" stroke="#c0c0c0" stroke-width="0.8"/><path d="M657.7 146.6V148" stroke="#a8a8a8" stroke-width="0.8"/><path d="M660.4 146V148" stroke="#c0c0c0" stroke-width="0.8"/><path d="M663.1 146.6V148" stroke="#a8a8a8" stroke-width="0.8"/><path d="M665.8 146V148" stroke="#c0c0c0" stroke-width="0.8"/><path d="M668.5 146.6V148" stroke="#a8a8a8" stroke-width="0.8"/><path d="M671.1 146V148" stroke="#c0c0c0" stroke-width="0.8"/><path d="M673.8 146.6V148" stroke="#a8a8a8" stroke-width="0.8"/><path d="M676.5 144.8V148" stroke="#d8d8d8" stroke-width="0.9"/><path d="M679.2 146.6V148" stroke="#a8a8a8" stroke-width="0.8"/><path d="M681.9 146V148" stroke="#c0c0c0" stroke-width="0.8"/><path d="M684.5 146.6V148" stroke="#a8a8a8" stroke-width="0.8"/><path d="M687.2 146V148" stroke="#c0c0c0" stroke-width="0.8"/><path d="M689.9 146.6V148" stroke="#a8a8a8" stroke-width="0.8"/><path d="M692.6 146V148" stroke="#c0c0c0" stroke-width="0.8"/><path d="M695.3 146.6V148" stroke="#a8a8a8" stroke-width="0.8"/><path d="M697.9 146V148" stroke="#c0c0c0" stroke-width="0.8"/><path d="M700.6 146.6V148" stroke="#a8a8a8" stroke-width="0.8"/><path d="M703.3 144.8V148" stroke="#d8d8d8" stroke-width="0.9"/><path d="M706.0 146.6V148" stroke="#a8a8a8" stroke-width="0.8"/><path d="M708.7 146V148" stroke="#c0c0c0" stroke-width="0.8"/><path d="M711.3 146.6V148" stroke="#a8a8a8" stroke-width="0.8"/><path d="M714.0 146V148" stroke="#c0c0c0" stroke-width="0.8"/><path d="M716.7 146.6V148" stroke="#a8a8a8" stroke-width="0.8"/><path d="M719.4 146V148" stroke="#c0c0c0" stroke-width="0.8"/><path d="M722.1 146.6V148" stroke="#a8a8a8" stroke-width="0.8"/><path d="M724.7 146V148" stroke="#c0c0c0" stroke-width="0.8"/><path d="M727.4 146.6V148" stroke="#a8a8a8" stroke-width="0.8"/><path d="M730.1 144.8V148" stroke="#d8d8d8" stroke-width="0.9"/><path d="M732.8 146.6V148" stroke="#a8a8a8" stroke-width="0.8"/><path d="M735.5 146V148" stroke="#c0c0c0" stroke-width="0.8"/><path d="M738.1 146.6V148" stroke="#a8a8a8" stroke-width="0.8"/><path d="M740.8 146V148" stroke="#c0c0c0" stroke-width="0.8"/><path d="M743.5 146.6V148" stroke="#a8a8a8" stroke-width="0.8"/><path d="M746.2 146V148" stroke="#c0c0c0" stroke-width="0.8"/><path d="M748.9 146.6V148" stroke="#a8a8a8" stroke-width="0.8"/><path d="M751.5 146V148" stroke="#c0c0c0" stroke-width="0.8"/><path d="M754.2 146.6V148" stroke="#a8a8a8" stroke-width="0.8"/><path d="M756.9 144.8V148" stroke="#d8d8d8" stroke-width="0.9"/><path d="M759.6 146.6V148" stroke="#a8a8a8" stroke-width="0.8"/><path d="M762.3 146V148" stroke="#c0c0c0" stroke-width="0.8"/><path d="M764.9 146.6V148" stroke="#a8a8a8" stroke-width="0.8"/><path d="M767.6 146V148" stroke="#c0c0c0" stroke-width="0.8"/><path d="M770.3 146.6V148" stroke="#a8a8a8" stroke-width="0.8"/><path d="M773.0 146V148" stroke="#c0c0c0" stroke-width="0.8"/><path d="M775.7 146.6V148" stroke="#a8a8a8" stroke-width="0.8"/><path d="M778.3 146V148" stroke="#c0c0c0" stroke-width="0.8"/><path d="M781.0 146.6V148" stroke="#a8a8a8" stroke-width="0.8"/><path d="M783.7 144.8V148" stroke="#d8d8d8" stroke-width="0.9"/><path d="M786.4 146.6V148" stroke="#a8a8a8" stroke-width="0.8"/><path d="M789.1 146V148" stroke="#c0c0c0" stroke-width="0.8"/><path d="M791.7 146.6V148" stroke="#a8a8a8" stroke-width="0.8"/><path d="M794.4 146V148" stroke="#c0c0c0" stroke-width="0.8"/><path d="M797.1 146.6V148" stroke="#a8a8a8" stroke-width="0.8"/><path d="M799.8 146V148" stroke="#c0c0c0" stroke-width="0.8"/><path d="M802.5 146.6V148" stroke="#a8a8a8" stroke-width="0.8"/><path d="M805.1 146V148" stroke="#c0c0c0" stroke-width="0.8"/><path d="M807.8 146.6V148" stroke="#a8a8a8" stroke-width="0.8"/><path d="M810.5 144.8V148" stroke="#d8d8d8" stroke-width="0.9"/><path d="M813.2 146.6V148" stroke="#a8a8a8" stroke-width="0.8"/><path d="M815.9 146V148" stroke="#c0c0c0" stroke-width="0.8"/><path d="M818.5 146.6V148" stroke="#a8a8a8" stroke-width="0.8"/><path d="M821.2 146V148" stroke="#c0c0c0" stroke-width="0.8"/><path d="M823.9 146.6V148" stroke="#a8a8a8" stroke-width="0.8"/><path d="M826.6 146V148" stroke="#c0c0c0" stroke-width="0.8"/><path d="M829.3 146.6V148" stroke="#a8a8a8" stroke-width="0.8"/><path d="M831.9 146V148" stroke="#c0c0c0" stroke-width="0.8"/><path d="M834.6 146.6V148" stroke="#a8a8a8" stroke-width="0.8"/><path d="M837.3 144.8V148" stroke="#d8d8d8" stroke-width="0.9"/><path d="M840.0 146.6V148" stroke="#a8a8a8" stroke-width="0.8"/><path d="M842.7 146V148" stroke="#c0c0c0" stroke-width="0.8"/><path d="M845.3 146.6V148" stroke="#a8a8a8" stroke-width="0.8"/><path d="M848.0 146V148" stroke="#c0c0c0" stroke-width="0.8"/><path d="M850.7 146.6V148" stroke="#a8a8a8" stroke-width="0.8"/><path d="M853.4 146V148" stroke="#c0c0c0" stroke-width="0.8"/><path d="M856.1 146.6V148" stroke="#a8a8a8" stroke-width="0.8"/><path d="M858.7 146V148" stroke="#c0c0c0" stroke-width="0.8"/><path d="M861.4 146.6V148" stroke="#a8a8a8" stroke-width="0.8"/><path d="M864.1 144.8V148" stroke="#d8d8d8" stroke-width="0.9"/><path d="M866.8 146.6V148" stroke="#a8a8a8" stroke-width="0.8"/><path d="M869.5 146V148" stroke="#c0c0c0" stroke-width="0.8"/><path d="M872.1 146.6V148" stroke="#a8a8a8" stroke-width="0.8"/><path d="M874.8 146V148" stroke="#c0c0c0" stroke-width="0.8"/><path d="M877.5 146.6V148" stroke="#a8a8a8" stroke-width="0.8"/><path d="M880.2 146V148" stroke="#c0c0c0" stroke-width="0.8"/><path d="M882.9 146.6V148" stroke="#a8a8a8" stroke-width="0.8"/><path d="M885.5 146V148" stroke="#c0c0c0" stroke-width="0.8"/><path d="M888.2 146.6V148" stroke="#a8a8a8" stroke-width="0.8"/><path d="M890.9 144.8V148" stroke="#d8d8d8" stroke-width="0.9"/><path d="M893.6 146.6V148" stroke="#a8a8a8" stroke-width="0.8"/><path d="M896.3 146V148" stroke="#c0c0c0" stroke-width="0.8"/><path d="M898.9 146.6V148" stroke="#a8a8a8" stroke-width="0.8"/><path d="M901.6 146V148" stroke="#c0c0c0" stroke-width="0.8"/><path d="M904.3 146.6V148" stroke="#a8a8a8" stroke-width="0.8"/><path d="M907.0 146V148" stroke="#c0c0c0" stroke-width="0.8"/><path d="M909.7 146.6V148" stroke="#a8a8a8" stroke-width="0.8"/><path d="M912.3 146V148" stroke="#c0c0c0" stroke-width="0.8"/><path d="M915.0 146.6V148" stroke="#a8a8a8" stroke-width="0.8"/><path d="M917.7 144.8V148" stroke="#d8d8d8" stroke-width="0.9"/><path d="M920.4 146.6V148" stroke="#a8a8a8" stroke-width="0.8"/><path d="M923.1 146V148" stroke="#c0c0c0" stroke-width="0.8"/><path d="M925.7 146.6V148" stroke="#a8a8a8" stroke-width="0.8"/><path d="M928.4 146V148" stroke="#c0c0c0" stroke-width="0.8"/><path d="M931.1 146.6V148" stroke="#a8a8a8" stroke-width="0.8"/><path d="M933.8 146V148" stroke="#c0c0c0" stroke-width="0.8"/><path d="M936.5 146.6V148" stroke="#a8a8a8" stroke-width="0.8"/><path d="M939.1 146V148" stroke="#c0c0c0" stroke-width="0.8"/><path d="M941.8 146.6V148" stroke="#a8a8a8" stroke-width="0.8"/><path d="M944.5 144.8V148" stroke="#d8d8d8" stroke-width="0.9"/><path d="M947.2 146.6V148" stroke="#a8a8a8" stroke-width="0.8"/><path d="M949.9 146V148" stroke="#c0c0c0" stroke-width="0.8"/><path d="M952.5 146.6V148" stroke="#a8a8a8" stroke-width="0.8"/><path d="M955.2 146V148" stroke="#c0c0c0" stroke-width="0.8"/><path d="M957.9 146.6V148" stroke="#a8a8a8" stroke-width="0.8"/><path d="M960.6 146V148" stroke="#c0c0c0" stroke-width="0.8"/><path d="M963.3 146.6V148" stroke="#a8a8a8" stroke-width="0.8"/><path d="M965.9 146V148" stroke="#c0c0c0" stroke-width="0.8"/><path d="M968.6 146.6V148" stroke="#a8a8a8" stroke-width="0.8"/><path d="M971.3 144.8V148" stroke="#d8d8d8" stroke-width="0.9"/><path d="M974.0 146.6V148" stroke="#a8a8a8" stroke-width="0.8"/><path d="M976.7 146V148" stroke="#c0c0c0" stroke-width="0.8"/><path d="M979.3 146.6V148" stroke="#a8a8a8" stroke-width="0.8"/><path d="M982.0 146V148" stroke="#c0c0c0" stroke-width="0.8"/><path d="M984.7 146.6V148" stroke="#a8a8a8" stroke-width="0.8"/><path d="M987.4 146V148" stroke="#c0c0c0" stroke-width="0.8"/><path d="M990.1 146.6V148" stroke="#a8a8a8" stroke-width="0.8"/><path d="M992.7 146V148" stroke="#c0c0c0" stroke-width="0.8"/><path d="M995.4 146.6V148" stroke="#a8a8a8" stroke-width="0.8"/><path d="M998.1 144.8V148" stroke="#d8d8d8" stroke-width="0.9"/><path d="M1000.8 146.6V148" stroke="#a8a8a8" stroke-width="0.8"/><path d="M1003.5 146V148" stroke="#c0c0c0" stroke-width="0.8"/><path d="M1006.1 146.6V148" stroke="#a8a8a8" stroke-width="0.8"/><path d="M1008.8 146V148" stroke="#c0c0c0" stroke-width="0.8"/><path d="M1011.5 146.6V148" stroke="#a8a8a8" stroke-width="0.8"/><path d="M1014.2 146V148" stroke="#c0c0c0" stroke-width="0.8"/><path d="M1016.9 146.6V148" stroke="#a8a8a8" stroke-width="0.8"/><path d="M1019.5 146V148" stroke="#c0c0c0" stroke-width="0.8"/><path d="M1022.2 146.6V148" stroke="#a8a8a8" stroke-width="0.8"/><path d="M1024.9 144.8V148" stroke="#d8d8d8" stroke-width="0.9"/><path d="M1027.6 146.6V148" stroke="#a8a8a8" stroke-width="0.8"/><path d="M1030.3 146V148" stroke="#c0c0c0" stroke-width="0.8"/><path d="M1032.9 146.6V148" stroke="#a8a8a8" stroke-width="0.8"/><path d="M1035.6 146V148" stroke="#c0c0c0" stroke-width="0.8"/><path d="M1038.3 146.6V148" stroke="#a8a8a8" stroke-width="0.8"/><path d="M1041.0 146V148" stroke="#c0c0c0" stroke-width="0.8"/><path d="M1043.7 146.6V148" stroke="#a8a8a8" stroke-width="0.8"/><path d="M1046.3 146V148" stroke="#c0c0c0" stroke-width="0.8"/><path d="M1049.0 146.6V148" stroke="#a8a8a8" stroke-width="0.8"/></g></svg>
<div class="a" style="left:65.7px;top:135.8px;font-size:7.9px;line-height:9px;color:#d6d6d6;white-space:nowrap">-100</div>
<div class="a" style="left:94.7px;top:135.8px;font-size:7.9px;line-height:9px;color:#d6d6d6;white-space:nowrap">-95</div>
<div class="a" style="left:121.5px;top:135.8px;font-size:7.9px;line-height:9px;color:#d6d6d6;white-space:nowrap">-90</div>
<div class="a" style="left:148.3px;top:135.8px;font-size:7.9px;line-height:9px;color:#d6d6d6;white-space:nowrap">-85</div>
<div class="a" style="left:175.1px;top:135.8px;font-size:7.9px;line-height:9px;color:#d6d6d6;white-space:nowrap">-80</div>
<div class="a" style="left:201.9px;top:135.8px;font-size:7.9px;line-height:9px;color:#d6d6d6;white-space:nowrap">-75</div>
<div class="a" style="left:228.7px;top:135.8px;font-size:7.9px;line-height:9px;color:#d6d6d6;white-space:nowrap">-70</div>
<div class="a" style="left:255.5px;top:135.8px;font-size:7.9px;line-height:9px;color:#d6d6d6;white-space:nowrap">-65</div>
<div class="a" style="left:282.3px;top:135.8px;font-size:7.9px;line-height:9px;color:#d6d6d6;white-space:nowrap">-60</div>
<div class="a" style="left:309.1px;top:135.8px;font-size:7.9px;line-height:9px;color:#d6d6d6;white-space:nowrap">-55</div>
<div class="a" style="left:335.9px;top:135.8px;font-size:7.9px;line-height:9px;color:#d6d6d6;white-space:nowrap">-50</div>
<div class="a" style="left:362.7px;top:135.8px;font-size:7.9px;line-height:9px;color:#d6d6d6;white-space:nowrap">-45</div>
<div class="a" style="left:389.5px;top:135.8px;font-size:7.9px;line-height:9px;color:#d6d6d6;white-space:nowrap">-40</div>
<div class="a" style="left:416.3px;top:135.8px;font-size:7.9px;line-height:9px;color:#d6d6d6;white-space:nowrap">-35</div>
<div class="a" style="left:443.1px;top:135.8px;font-size:7.9px;line-height:9px;color:#d6d6d6;white-space:nowrap">-30</div>
<div class="a" style="left:469.9px;top:135.8px;font-size:7.9px;line-height:9px;color:#d6d6d6;white-space:nowrap">-25</div>
<div class="a" style="left:496.7px;top:135.8px;font-size:7.9px;line-height:9px;color:#d6d6d6;white-space:nowrap">-20</div>
<div class="a" style="left:523.5px;top:135.8px;font-size:7.9px;line-height:9px;color:#d6d6d6;white-space:nowrap">-15</div>
<div class="a" style="left:550.3px;top:135.8px;font-size:7.9px;line-height:9px;color:#d6d6d6;white-space:nowrap">-10</div>
<div class="a" style="left:579.3px;top:135.8px;font-size:7.9px;line-height:9px;color:#d6d6d6;white-space:nowrap">-5</div>
<div class="a" style="left:608.1px;top:135.8px;font-size:7.9px;line-height:9px;color:#d6d6d6;white-space:nowrap">0</div>
<div class="a" style="left:634.9px;top:135.8px;font-size:7.9px;line-height:9px;color:#d6d6d6;white-space:nowrap">5</div>
<div class="a" style="left:659.5px;top:135.8px;font-size:7.9px;line-height:9px;color:#d6d6d6;white-space:nowrap">10</div>
<div class="a" style="left:686.3px;top:135.8px;font-size:7.9px;line-height:9px;color:#d6d6d6;white-space:nowrap">15</div>
<div class="a" style="left:713.1px;top:135.8px;font-size:7.9px;line-height:9px;color:#d6d6d6;white-space:nowrap">20</div>
<div class="a" style="left:739.9px;top:135.8px;font-size:7.9px;line-height:9px;color:#d6d6d6;white-space:nowrap">25</div>
<div class="a" style="left:766.7px;top:135.8px;font-size:7.9px;line-height:9px;color:#d6d6d6;white-space:nowrap">30</div>
<div class="a" style="left:793.5px;top:135.8px;font-size:7.9px;line-height:9px;color:#d6d6d6;white-space:nowrap">35</div>
<div class="a" style="left:820.3px;top:135.8px;font-size:7.9px;line-height:9px;color:#d6d6d6;white-space:nowrap">40</div>
<div class="a" style="left:847.1px;top:135.8px;font-size:7.9px;line-height:9px;color:#d6d6d6;white-space:nowrap">45</div>
<div class="a" style="left:873.9px;top:135.8px;font-size:7.9px;line-height:9px;color:#d6d6d6;white-space:nowrap">50</div>
<div class="a" style="left:900.7px;top:135.8px;font-size:7.9px;line-height:9px;color:#d6d6d6;white-space:nowrap">55</div>
<div class="a" style="left:927.5px;top:135.8px;font-size:7.9px;line-height:9px;color:#d6d6d6;white-space:nowrap">60</div>
<div class="a" style="left:954.3px;top:135.8px;font-size:7.9px;line-height:9px;color:#d6d6d6;white-space:nowrap">65</div>
<div class="a" style="left:981.1px;top:135.8px;font-size:7.9px;line-height:9px;color:#d6d6d6;white-space:nowrap">70</div>
<div class="a" style="left:1007.9px;top:135.8px;font-size:7.9px;line-height:9px;color:#d6d6d6;white-space:nowrap">75</div>
<div class="a" style="left:1041px;top:135.8px;font-size:7.9px;line-height:9px;color:#d6d6d6;white-space:nowrap">миллиметры</div>
<svg class="a" style="left:0px;top:148px" width="41" height="530" viewBox="0 0 41 530"><g transform="translate(0,-148)"><path d="M39 149.4H41" stroke="#c0c0c0" stroke-width="0.8"/><path d="M39.6 152.1H41" stroke="#a8a8a8" stroke-width="0.8"/><path d="M39 154.8H41" stroke="#c0c0c0" stroke-width="0.8"/><path d="M39.6 157.5H41" stroke="#a8a8a8" stroke-width="0.8"/><path d="M39 160.1H41" stroke="#c0c0c0" stroke-width="0.8"/><path d="M39.6 162.8H41" stroke="#a8a8a8" stroke-width="0.8"/><path d="M37.8 165.5H41" stroke="#d8d8d8" stroke-width="0.9"/><path d="M39.6 168.2H41" stroke="#a8a8a8" stroke-width="0.8"/><path d="M39 170.9H41" stroke="#c0c0c0" stroke-width="0.8"/><path d="M39.6 173.5H41" stroke="#a8a8a8" stroke-width="0.8"/><path d="M39 176.2H41" stroke="#c0c0c0" stroke-width="0.8"/><path d="M39.6 178.9H41" stroke="#a8a8a8" stroke-width="0.8"/><path d="M39 181.6H41" stroke="#c0c0c0" stroke-width="0.8"/><path d="M39.6 184.3H41" stroke="#a8a8a8" stroke-width="0.8"/><path d="M39 186.9H41" stroke="#c0c0c0" stroke-width="0.8"/><path d="M39.6 189.6H41" stroke="#a8a8a8" stroke-width="0.8"/><path d="M37.8 192.3H41" stroke="#d8d8d8" stroke-width="0.9"/><path d="M39.6 195.0H41" stroke="#a8a8a8" stroke-width="0.8"/><path d="M39 197.7H41" stroke="#c0c0c0" stroke-width="0.8"/><path d="M39.6 200.3H41" stroke="#a8a8a8" stroke-width="0.8"/><path d="M39 203.0H41" stroke="#c0c0c0" stroke-width="0.8"/><path d="M39.6 205.7H41" stroke="#a8a8a8" stroke-width="0.8"/><path d="M39 208.4H41" stroke="#c0c0c0" stroke-width="0.8"/><path d="M39.6 211.1H41" stroke="#a8a8a8" stroke-width="0.8"/><path d="M39 213.7H41" stroke="#c0c0c0" stroke-width="0.8"/><path d="M39.6 216.4H41" stroke="#a8a8a8" stroke-width="0.8"/><path d="M37.8 219.1H41" stroke="#d8d8d8" stroke-width="0.9"/><path d="M39.6 221.8H41" stroke="#a8a8a8" stroke-width="0.8"/><path d="M39 224.5H41" stroke="#c0c0c0" stroke-width="0.8"/><path d="M39.6 227.1H41" stroke="#a8a8a8" stroke-width="0.8"/><path d="M39 229.8H41" stroke="#c0c0c0" stroke-width="0.8"/><path d="M39.6 232.5H41" stroke="#a8a8a8" stroke-width="0.8"/><path d="M39 235.2H41" stroke="#c0c0c0" stroke-width="0.8"/><path d="M39.6 237.9H41" stroke="#a8a8a8" stroke-width="0.8"/><path d="M39 240.5H41" stroke="#c0c0c0" stroke-width="0.8"/><path d="M39.6 243.2H41" stroke="#a8a8a8" stroke-width="0.8"/><path d="M37.8 245.9H41" stroke="#d8d8d8" stroke-width="0.9"/><path d="M39.6 248.6H41" stroke="#a8a8a8" stroke-width="0.8"/><path d="M39 251.3H41" stroke="#c0c0c0" stroke-width="0.8"/><path d="M39.6 253.9H41" stroke="#a8a8a8" stroke-width="0.8"/><path d="M39 256.6H41" stroke="#c0c0c0" stroke-width="0.8"/><path d="M39.6 259.3H41" stroke="#a8a8a8" stroke-width="0.8"/><path d="M39 262.0H41" stroke="#c0c0c0" stroke-width="0.8"/><path d="M39.6 264.7H41" stroke="#a8a8a8" stroke-width="0.8"/><path d="M39 267.3H41" stroke="#c0c0c0" stroke-width="0.8"/><path d="M39.6 270.0H41" stroke="#a8a8a8" stroke-width="0.8"/><path d="M37.8 272.7H41" stroke="#d8d8d8" stroke-width="0.9"/><path d="M39.6 275.4H41" stroke="#a8a8a8" stroke-width="0.8"/><path d="M39 278.1H41" stroke="#c0c0c0" stroke-width="0.8"/><path d="M39.6 280.7H41" stroke="#a8a8a8" stroke-width="0.8"/><path d="M39 283.4H41" stroke="#c0c0c0" stroke-width="0.8"/><path d="M39.6 286.1H41" stroke="#a8a8a8" stroke-width="0.8"/><path d="M39 288.8H41" stroke="#c0c0c0" stroke-width="0.8"/><path d="M39.6 291.5H41" stroke="#a8a8a8" stroke-width="0.8"/><path d="M39 294.1H41" stroke="#c0c0c0" stroke-width="0.8"/><path d="M39.6 296.8H41" stroke="#a8a8a8" stroke-width="0.8"/><path d="M37.8 299.5H41" stroke="#d8d8d8" stroke-width="0.9"/><path d="M39.6 302.2H41" stroke="#a8a8a8" stroke-width="0.8"/><path d="M39 304.9H41" stroke="#c0c0c0" stroke-width="0.8"/><path d="M39.6 307.5H41" stroke="#a8a8a8" stroke-width="0.8"/><path d="M39 310.2H41" stroke="#c0c0c0" stroke-width="0.8"/><path d="M39.6 312.9H41" stroke="#a8a8a8" stroke-width="0.8"/><path d="M39 315.6H41" stroke="#c0c0c0" stroke-width="0.8"/><path d="M39.6 318.3H41" stroke="#a8a8a8" stroke-width="0.8"/><path d="M39 320.9H41" stroke="#c0c0c0" stroke-width="0.8"/><path d="M39.6 323.6H41" stroke="#a8a8a8" stroke-width="0.8"/><path d="M37.8 326.3H41" stroke="#d8d8d8" stroke-width="0.9"/><path d="M39.6 329.0H41" stroke="#a8a8a8" stroke-width="0.8"/><path d="M39 331.7H41" stroke="#c0c0c0" stroke-width="0.8"/><path d="M39.6 334.3H41" stroke="#a8a8a8" stroke-width="0.8"/><path d="M39 337.0H41" stroke="#c0c0c0" stroke-width="0.8"/><path d="M39.6 339.7H41" stroke="#a8a8a8" stroke-width="0.8"/><path d="M39 342.4H41" stroke="#c0c0c0" stroke-width="0.8"/><path d="M39.6 345.1H41" stroke="#a8a8a8" stroke-width="0.8"/><path d="M39 347.7H41" stroke="#c0c0c0" stroke-width="0.8"/><path d="M39.6 350.4H41" stroke="#a8a8a8" stroke-width="0.8"/><path d="M37.8 353.1H41" stroke="#d8d8d8" stroke-width="0.9"/><path d="M39.6 355.8H41" stroke="#a8a8a8" stroke-width="0.8"/><path d="M39 358.5H41" stroke="#c0c0c0" stroke-width="0.8"/><path d="M39.6 361.1H41" stroke="#a8a8a8" stroke-width="0.8"/><path d="M39 363.8H41" stroke="#c0c0c0" stroke-width="0.8"/><path d="M39.6 366.5H41" stroke="#a8a8a8" stroke-width="0.8"/><path d="M39 369.2H41" stroke="#c0c0c0" stroke-width="0.8"/><path d="M39.6 371.9H41" stroke="#a8a8a8" stroke-width="0.8"/><path d="M39 374.5H41" stroke="#c0c0c0" stroke-width="0.8"/><path d="M39.6 377.2H41" stroke="#a8a8a8" stroke-width="0.8"/><path d="M37.8 379.9H41" stroke="#d8d8d8" stroke-width="0.9"/><path d="M39.6 382.6H41" stroke="#a8a8a8" stroke-width="0.8"/><path d="M39 385.3H41" stroke="#c0c0c0" stroke-width="0.8"/><path d="M39.6 387.9H41" stroke="#a8a8a8" stroke-width="0.8"/><path d="M39 390.6H41" stroke="#c0c0c0" stroke-width="0.8"/><path d="M39.6 393.3H41" stroke="#a8a8a8" stroke-width="0.8"/><path d="M39 396.0H41" stroke="#c0c0c0" stroke-width="0.8"/><path d="M39.6 398.7H41" stroke="#a8a8a8" stroke-width="0.8"/><path d="M39 401.3H41" stroke="#c0c0c0" stroke-width="0.8"/><path d="M39.6 404.0H41" stroke="#a8a8a8" stroke-width="0.8"/><path d="M37.8 406.7H41" stroke="#d8d8d8" stroke-width="0.9"/><path d="M39.6 409.4H41" stroke="#a8a8a8" stroke-width="0.8"/><path d="M39 412.1H41" stroke="#c0c0c0" stroke-width="0.8"/><path d="M39.6 414.7H41" stroke="#a8a8a8" stroke-width="0.8"/><path d="M39 417.4H41" stroke="#c0c0c0" stroke-width="0.8"/><path d="M39.6 420.1H41" stroke="#a8a8a8" stroke-width="0.8"/><path d="M39 422.8H41" stroke="#c0c0c0" stroke-width="0.8"/><path d="M39.6 425.5H41" stroke="#a8a8a8" stroke-width="0.8"/><path d="M39 428.1H41" stroke="#c0c0c0" stroke-width="0.8"/><path d="M39.6 430.8H41" stroke="#a8a8a8" stroke-width="0.8"/><path d="M37.8 433.5H41" stroke="#d8d8d8" stroke-width="0.9"/><path d="M39.6 436.2H41" stroke="#a8a8a8" stroke-width="0.8"/><path d="M39 438.9H41" stroke="#c0c0c0" stroke-width="0.8"/><path d="M39.6 441.5H41" stroke="#a8a8a8" stroke-width="0.8"/><path d="M39 444.2H41" stroke="#c0c0c0" stroke-width="0.8"/><path d="M39.6 446.9H41" stroke="#a8a8a8" stroke-width="0.8"/><path d="M39 449.6H41" stroke="#c0c0c0" stroke-width="0.8"/><path d="M39.6 452.3H41" stroke="#a8a8a8" stroke-width="0.8"/><path d="M39 454.9H41" stroke="#c0c0c0" stroke-width="0.8"/><path d="M39.6 457.6H41" stroke="#a8a8a8" stroke-width="0.8"/><path d="M37.8 460.3H41" stroke="#d8d8d8" stroke-width="0.9"/><path d="M39.6 463.0H41" stroke="#a8a8a8" stroke-width="0.8"/><path d="M39 465.7H41" stroke="#c0c0c0" stroke-width="0.8"/><path d="M39.6 468.3H41" stroke="#a8a8a8" stroke-width="0.8"/><path d="M39 471.0H41" stroke="#c0c0c0" stroke-width="0.8"/><path d="M39.6 473.7H41" stroke="#a8a8a8" stroke-width="0.8"/><path d="M39 476.4H41" stroke="#c0c0c0" stroke-width="0.8"/><path d="M39.6 479.1H41" stroke="#a8a8a8" stroke-width="0.8"/><path d="M39 481.7H41" stroke="#c0c0c0" stroke-width="0.8"/><path d="M39.6 484.4H41" stroke="#a8a8a8" stroke-width="0.8"/><path d="M37.8 487.1H41" stroke="#d8d8d8" stroke-width="0.9"/><path d="M39.6 489.8H41" stroke="#a8a8a8" stroke-width="0.8"/><path d="M39 492.5H41" stroke="#c0c0c0" stroke-width="0.8"/><path d="M39.6 495.1H41" stroke="#a8a8a8" stroke-width="0.8"/><path d="M39 497.8H41" stroke="#c0c0c0" stroke-width="0.8"/><path d="M39.6 500.5H41" stroke="#a8a8a8" stroke-width="0.8"/><path d="M39 503.2H41" stroke="#c0c0c0" stroke-width="0.8"/><path d="M39.6 505.9H41" stroke="#a8a8a8" stroke-width="0.8"/><path d="M39 508.5H41" stroke="#c0c0c0" stroke-width="0.8"/><path d="M39.6 511.2H41" stroke="#a8a8a8" stroke-width="0.8"/><path d="M37.8 513.9H41" stroke="#d8d8d8" stroke-width="0.9"/><path d="M39.6 516.6H41" stroke="#a8a8a8" stroke-width="0.8"/><path d="M39 519.3H41" stroke="#c0c0c0" stroke-width="0.8"/><path d="M39.6 521.9H41" stroke="#a8a8a8" stroke-width="0.8"/><path d="M39 524.6H41" stroke="#c0c0c0" stroke-width="0.8"/><path d="M39.6 527.3H41" stroke="#a8a8a8" stroke-width="0.8"/><path d="M39 530.0H41" stroke="#c0c0c0" stroke-width="0.8"/><path d="M39.6 532.7H41" stroke="#a8a8a8" stroke-width="0.8"/><path d="M39 535.3H41" stroke="#c0c0c0" stroke-width="0.8"/><path d="M39.6 538.0H41" stroke="#a8a8a8" stroke-width="0.8"/><path d="M37.8 540.7H41" stroke="#d8d8d8" stroke-width="0.9"/><path d="M39.6 543.4H41" stroke="#a8a8a8" stroke-width="0.8"/><path d="M39 546.1H41" stroke="#c0c0c0" stroke-width="0.8"/><path d="M39.6 548.7H41" stroke="#a8a8a8" stroke-width="0.8"/><path d="M39 551.4H41" stroke="#c0c0c0" stroke-width="0.8"/><path d="M39.6 554.1H41" stroke="#a8a8a8" stroke-width="0.8"/><path d="M39 556.8H41" stroke="#c0c0c0" stroke-width="0.8"/><path d="M39.6 559.5H41" stroke="#a8a8a8" stroke-width="0.8"/><path d="M39 562.1H41" stroke="#c0c0c0" stroke-width="0.8"/><path d="M39.6 564.8H41" stroke="#a8a8a8" stroke-width="0.8"/><path d="M37.8 567.5H41" stroke="#d8d8d8" stroke-width="0.9"/><path d="M39.6 570.2H41" stroke="#a8a8a8" stroke-width="0.8"/><path d="M39 572.9H41" stroke="#c0c0c0" stroke-width="0.8"/><path d="M39.6 575.5H41" stroke="#a8a8a8" stroke-width="0.8"/><path d="M39 578.2H41" stroke="#c0c0c0" stroke-width="0.8"/><path d="M39.6 580.9H41" stroke="#a8a8a8" stroke-width="0.8"/><path d="M39 583.6H41" stroke="#c0c0c0" stroke-width="0.8"/><path d="M39.6 586.3H41" stroke="#a8a8a8" stroke-width="0.8"/><path d="M39 588.9H41" stroke="#c0c0c0" stroke-width="0.8"/><path d="M39.6 591.6H41" stroke="#a8a8a8" stroke-width="0.8"/><path d="M37.8 594.3H41" stroke="#d8d8d8" stroke-width="0.9"/><path d="M39.6 597.0H41" stroke="#a8a8a8" stroke-width="0.8"/><path d="M39 599.7H41" stroke="#c0c0c0" stroke-width="0.8"/><path d="M39.6 602.3H41" stroke="#a8a8a8" stroke-width="0.8"/><path d="M39 605.0H41" stroke="#c0c0c0" stroke-width="0.8"/><path d="M39.6 607.7H41" stroke="#a8a8a8" stroke-width="0.8"/><path d="M39 610.4H41" stroke="#c0c0c0" stroke-width="0.8"/><path d="M39.6 613.1H41" stroke="#a8a8a8" stroke-width="0.8"/><path d="M39 615.7H41" stroke="#c0c0c0" stroke-width="0.8"/><path d="M39.6 618.4H41" stroke="#a8a8a8" stroke-width="0.8"/><path d="M37.8 621.1H41" stroke="#d8d8d8" stroke-width="0.9"/><path d="M39.6 623.8H41" stroke="#a8a8a8" stroke-width="0.8"/><path d="M39 626.5H41" stroke="#c0c0c0" stroke-width="0.8"/><path d="M39.6 629.1H41" stroke="#a8a8a8" stroke-width="0.8"/><path d="M39 631.8H41" stroke="#c0c0c0" stroke-width="0.8"/><path d="M39.6 634.5H41" stroke="#a8a8a8" stroke-width="0.8"/><path d="M39 637.2H41" stroke="#c0c0c0" stroke-width="0.8"/><path d="M39.6 639.9H41" stroke="#a8a8a8" stroke-width="0.8"/><path d="M39 642.5H41" stroke="#c0c0c0" stroke-width="0.8"/><path d="M39.6 645.2H41" stroke="#a8a8a8" stroke-width="0.8"/><path d="M37.8 647.9H41" stroke="#d8d8d8" stroke-width="0.9"/><path d="M39.6 650.6H41" stroke="#a8a8a8" stroke-width="0.8"/><path d="M39 653.3H41" stroke="#c0c0c0" stroke-width="0.8"/><path d="M39.6 655.9H41" stroke="#a8a8a8" stroke-width="0.8"/><path d="M39 658.6H41" stroke="#c0c0c0" stroke-width="0.8"/><path d="M39.6 661.3H41" stroke="#a8a8a8" stroke-width="0.8"/><path d="M39 664.0H41" stroke="#c0c0c0" stroke-width="0.8"/><path d="M39.6 666.7H41" stroke="#a8a8a8" stroke-width="0.8"/><path d="M39 669.3H41" stroke="#c0c0c0" stroke-width="0.8"/><path d="M39.6 672.0H41" stroke="#a8a8a8" stroke-width="0.8"/><path d="M37.8 674.7H41" stroke="#d8d8d8" stroke-width="0.9"/><path d="M39.6 677.4H41" stroke="#a8a8a8" stroke-width="0.8"/></g></svg>
<div class="a" style="left:22.5px;top:161.0px;width:24px;height:9px;text-align:center;font-size:7.9px;line-height:9px;color:#d6d6d6;transform:rotate(-90deg)">605</div>
<div class="a" style="left:22.5px;top:187.8px;width:24px;height:9px;text-align:center;font-size:7.9px;line-height:9px;color:#d6d6d6;transform:rotate(-90deg)">600</div>
<div class="a" style="left:22.5px;top:214.6px;width:24px;height:9px;text-align:center;font-size:7.9px;line-height:9px;color:#d6d6d6;transform:rotate(-90deg)">595</div>
<div class="a" style="left:22.5px;top:241.4px;width:24px;height:9px;text-align:center;font-size:7.9px;line-height:9px;color:#d6d6d6;transform:rotate(-90deg)">590</div>
<div class="a" style="left:22.5px;top:268.2px;width:24px;height:9px;text-align:center;font-size:7.9px;line-height:9px;color:#d6d6d6;transform:rotate(-90deg)">585</div>
<div class="a" style="left:22.5px;top:295.0px;width:24px;height:9px;text-align:center;font-size:7.9px;line-height:9px;color:#d6d6d6;transform:rotate(-90deg)">580</div>
<div class="a" style="left:22.5px;top:321.8px;width:24px;height:9px;text-align:center;font-size:7.9px;line-height:9px;color:#d6d6d6;transform:rotate(-90deg)">575</div>
<div class="a" style="left:22.5px;top:348.6px;width:24px;height:9px;text-align:center;font-size:7.9px;line-height:9px;color:#d6d6d6;transform:rotate(-90deg)">570</div>
<div class="a" style="left:22.5px;top:375.4px;width:24px;height:9px;text-align:center;font-size:7.9px;line-height:9px;color:#d6d6d6;transform:rotate(-90deg)">565</div>
<div class="a" style="left:22.5px;top:402.2px;width:24px;height:9px;text-align:center;font-size:7.9px;line-height:9px;color:#d6d6d6;transform:rotate(-90deg)">560</div>
<div class="a" style="left:22.5px;top:429.0px;width:24px;height:9px;text-align:center;font-size:7.9px;line-height:9px;color:#d6d6d6;transform:rotate(-90deg)">555</div>
<div class="a" style="left:22.5px;top:455.8px;width:24px;height:9px;text-align:center;font-size:7.9px;line-height:9px;color:#d6d6d6;transform:rotate(-90deg)">550</div>
<div class="a" style="left:22.5px;top:482.6px;width:24px;height:9px;text-align:center;font-size:7.9px;line-height:9px;color:#d6d6d6;transform:rotate(-90deg)">545</div>
<div class="a" style="left:22.5px;top:509.4px;width:24px;height:9px;text-align:center;font-size:7.9px;line-height:9px;color:#d6d6d6;transform:rotate(-90deg)">540</div>
<div class="a" style="left:22.5px;top:536.2px;width:24px;height:9px;text-align:center;font-size:7.9px;line-height:9px;color:#d6d6d6;transform:rotate(-90deg)">535</div>
<div class="a" style="left:22.5px;top:563.0px;width:24px;height:9px;text-align:center;font-size:7.9px;line-height:9px;color:#d6d6d6;transform:rotate(-90deg)">530</div>
<div class="a" style="left:22.5px;top:589.8px;width:24px;height:9px;text-align:center;font-size:7.9px;line-height:9px;color:#d6d6d6;transform:rotate(-90deg)">525</div>
<div class="a" style="left:22.5px;top:616.6px;width:24px;height:9px;text-align:center;font-size:7.9px;line-height:9px;color:#d6d6d6;transform:rotate(-90deg)">520</div>
<div class="a" style="left:22.5px;top:643.4px;width:24px;height:9px;text-align:center;font-size:7.9px;line-height:9px;color:#d6d6d6;transform:rotate(-90deg)">515</div>
<div class="a" style="left:3px;top:149.5px;width:24px;height:1px;background:#4e4e4e"></div>
<div class="a" style="left:3px;top:256.5px;width:24px;height:1px;background:#4e4e4e"></div>
<div class="a" style="left:3px;top:338.5px;width:24px;height:1px;background:#4e4e4e"></div>
<div class="a" style="left:3px;top:495.5px;width:24px;height:1px;background:#4e4e4e"></div>
<svg class="a" style="left:8px;top:157px" width="15" height="16" viewBox="0 0 15 16"><path d="M1 1L1 13L4.5 9.5L8 15.5L10.5 14L7 8.5L12 8Z" fill="#f4f4f4"/></svg>
<div class="a" style="left:3px;top:179px;width:24px;height:24px;background:#161616"></div>
<svg class="a" style="left:6px;top:183px" width="19" height="17" viewBox="0 0 19 17"><path d="M3 6V16" stroke="#eee" stroke-width="1.2"/><circle cx="3" cy="4" r="2" stroke="#eee" fill="none"/><path d="M8 4L18 8L13 10L15 15L13 16L11 11L8 14Z" fill="#f4f4f4"/></svg>
<svg class="a" style="left:6px;top:206px" width="18" height="18" viewBox="0 0 18 18"><g stroke="#595959" stroke-width="1.1" fill="none"><path d="M9 2V16M2 9H16M9 2L7 4M9 2L11 4M9 16L7 14M9 16L11 14M2 9L4 7M2 9L4 11M16 9L14 7M16 9L14 11"/><path d="M3 5Q9 -1 15 5M3 13Q9 19 15 13"/></g></svg>
<svg class="a" style="left:6px;top:232px" width="17" height="16" viewBox="0 0 17 16"><g stroke="#eaeaea" stroke-width="1.2" fill="none"><path d="M1 1Q8.5 4 16 1V15Q8.5 12 1 15Z"/><path d="M5 2.5V13.5M9 3V13M12.5 2.5V13.5M1 6Q8.5 8 16 6M1 10Q8.5 12 16 10"/></g></svg>
<svg class="a" style="left:7px;top:263px" width="16" height="17" viewBox="0 0 16 17"><path d="M2 15L3.5 10L12.5 1L15.5 4L6.5 13Z" fill="#e04848"/><path d="M2 15L3.5 10L6.5 13Z" fill="#f0e0d0"/></svg>
<svg class="a" style="left:23px;top:281px" width="4" height="4" viewBox="0 0 4 4"><path d="M4 0L4 4L0 4Z" fill="#5a5a5a"/></svg>
<svg class="a" style="left:5px;top:289px" width="19" height="17" viewBox="0 0 19 17"><path d="M9 2L16 7L11 15L4 10Z" fill="#f2f2f2"/><path d="M5 8Q1 9 2 14L4 15Q3 11 6 10Z" fill="#d83a2a"/></svg>
<svg class="a" style="left:23px;top:307px" width="4" height="4" viewBox="0 0 4 4"><path d="M4 0L4 4L0 4Z" fill="#5a5a5a"/></svg>
<svg class="a" style="left:4px;top:315px" width="14" height="18" viewBox="0 0 14 18"><rect x="1" y="2" width="11" height="11" rx="2.5" fill="#f0f0f0"/><circle cx="6.5" cy="7.5" r="3.2" fill="#2a3a44"/><path d="M12 13V17H9" stroke="#ccc" fill="none"/></svg>
<svg class="a" style="left:23px;top:334px" width="4" height="4" viewBox="0 0 4 4"><path d="M4 0L4 4L0 4Z" fill="#5a5a5a"/></svg>
<svg class="a" style="left:6px;top:345px" width="18" height="18" viewBox="0 0 18 18"><path d="M1 5L4 16L8 12L12 17M1 5L10 2L12 8" stroke="#eee" stroke-width="1.1" fill="none"/><path d="M14 7V14M11.5 11.5L14 14L16.5 11.5" stroke="#eee" stroke-width="1.2" fill="none"/></svg>
<svg class="a" style="left:6px;top:371px" width="17" height="17" viewBox="0 0 17 17"><rect x="1" y="1" width="15" height="15" stroke="#e8e8e8" stroke-width="1.2" fill="none"/></svg>
<svg class="a" style="left:6px;top:396px" width="17" height="17" viewBox="0 0 17 17"><circle cx="8.5" cy="8.5" r="7.5" stroke="#e8e8e8" stroke-width="1.2" fill="none"/></svg>
<svg class="a" style="left:23px;top:413px" width="4" height="4" viewBox="0 0 4 4"><path d="M4 0L4 4L0 4Z" fill="#5a5a5a"/></svg>
<svg class="a" style="left:6px;top:422px" width="17" height="16" viewBox="0 0 17 16"><path d="M8.5 1L16 6.5L13 15H4L1 6.5Z" stroke="#e8e8e8" stroke-width="1.2" fill="none"/></svg>
<svg class="a" style="left:23px;top:440px" width="4" height="4" viewBox="0 0 4 4"><path d="M4 0L4 4L0 4Z" fill="#5a5a5a"/></svg>
<svg class="a" style="left:8px;top:447px" width="15" height="16" viewBox="0 0 15 16"><path d="M2 3Q12 2 13 9Q13 14 9 15" stroke="#e8e8e8" stroke-width="1.2" fill="none"/></svg>
<svg class="a" style="left:6px;top:472px" width="18" height="18" viewBox="0 0 18 18"><text x="9" y="16.5" font-family="Liberation Serif" font-size="20" text-anchor="middle" fill="#f2f2f2">T</text></svg>
<svg class="a" style="left:8px;top:502px" width="13" height="17" viewBox="0 0 13 17"><path d="M6.5 0.5Q12.5 8 12.5 11Q12.5 16.5 6.5 16.5Q0.5 16.5 0.5 11Q0.5 8 6.5 0.5Z" fill="#f0a820"/><path d="M3.5 11Q3.5 14 6 14" stroke="#ffe090" fill="none"/></svg>
<svg class="a" style="left:6px;top:527px" width="17" height="18" viewBox="0 0 17 18"><path d="M2 16L6 10L3 6L8 2L15 3L16 8L11 12L5 17Z" fill="#f0f0f0"/><path d="M8 5L13 8M7 8L11 10" stroke="#888" stroke-width="0.6"/></svg>
<svg class="a" style="left:6px;top:553px" width="18" height="18" viewBox="0 0 18 18"><path d="M9 8L15 1L17 3L11 10Z" fill="#7a7a7a"/><path d="M9 9Q3 11 4 15Q6 17 10 13Q13 12 16 15" stroke="#e8e8e8" stroke-width="1.1" fill="none"/></svg>
<svg class="a" style="left:6px;top:579px" width="17" height="18" viewBox="0 0 17 18"><path d="M1 15L10 7L12 9L3 17Z" fill="#f0f0f0"/><path d="M10 7L15 2L17 4L12 9Z" fill="#f0a030"/></svg>
<svg class="a" style="left:6px;top:604px" width="18" height="17" viewBox="0 0 18 17"><path d="M1 11L10 4L14 8L6 15Z" fill="#f4f4f4"/><path d="M10 4L13 1.5L17 5.5L14 8Z" fill="#7a8ad8"/></svg>
<svg class="a" style="left:5px;top:631px" width="18" height="18" viewBox="0 0 18 18"><path d="M9 8L16 1L18 3L11 10Z" fill="#f0a030"/><path d="M1 11L9 5L13 9L6 16Z" fill="#e8901a"/><path d="M1 11L6 16" stroke="#ffe0a0" stroke-width="1.4"/></svg>
<svg class="a" style="left:6px;top:657px" width="17" height="15" viewBox="0 0 17 15"><path d="M2 13L9 6L12 9L5 14Z" fill="#595959"/><path d="M11 5L16 1" stroke="#4a4a4a" stroke-width="1.5"/></svg>
<div class="a" style="left:1091px;top:148px;width:1.5px;height:531px;background:#1c1c1c"></div>
<div class="a" style="left:41px;top:678px;width:1051px;height:1px;background:#1c1c1c"></div>
<div class="a" style="left:1092.5px;top:92px;width:187.5px;height:14px;background:#3b5f94"></div>
<div class="a" style="left:1096px;top:94.5px;font-size:7.2px;line-height:9px;color:#dce6f5;white-space:nowrap">Параметры инструмента: Редактирование ...</div>
<svg class="a" style="left:1250px;top:94px" width="30" height="11" viewBox="0 0 30 11"><text x="4" y="8.5" font-size="8.5" font-family="Liberation Sans" text-anchor="middle" fill="#e6eef8">?</text><path d="M13 2H17M14 2V6H16V2M12 6H18M15 6V9.5" stroke="#e6eef8" stroke-width="1"/><path d="M22 2L28 8M28 2L22 8" stroke="#f0f4fa" stroke-width="1.3"/></svg>
<div class="a" style="left:1093px;top:116.5px;width:187px;height:12.5px;background:#444444"></div>
<div class="a" style="left:1098.5px;top:117.5px;font-size:9px;line-height:11px;color:#dedede;white-space:nowrap">Плавно</div>
<svg class="a" style="left:1107px;top:137px" width="19" height="18" viewBox="0 0 19 18"><path d="M2 15Q0 9 3 6Q5 4 6 9Q6 12 7 8Q8 2 10 3Q12 4 12 9Q13 13 15 14" stroke="#f0f0f0" stroke-width="1.2" fill="none"/><path d="M13 12L17 15L13 16Z" fill="#f0f0f0"/></svg>
<div class="a" style="left:1130px;top:144px;width:7px;height:7px;background:#f4f4f4"></div>
<div class="a" style="left:1139.5px;top:143px;font-size:7.05px;line-height:9px;color:#dcdcdc;white-space:nowrap">Поддерживать плавные кривые</div>
<div class="a" style="left:1093px;top:169px;width:187px;height:12.5px;background:#444444"></div>
<div class="a" style="left:1098.5px;top:170px;font-size:9.2px;line-height:11px;color:#dedede;white-space:nowrap">Виртуальные средние точки</div>
<svg class="a" style="left:1107px;top:191px" width="19" height="17" viewBox="0 0 19 17"><path d="M3 14L16 3" stroke="#f0f0f0" stroke-width="1.1"/><rect x="0.5" y="12" width="4" height="4" fill="#f0f0f0"/><rect x="14" y="0.5" width="4" height="4" fill="#f0f0f0"/><rect x="7.5" y="6.5" width="3.5" height="3.5" fill="#333" stroke="#f0f0f0" stroke-width="0.9"/></svg>
<div class="a" style="left:1130px;top:196px;width:7px;height:7px;background:#f4f4f4"></div>
<div class="a" style="left:1139.5px;top:195px;font-size:7.1px;line-height:9px;color:#dcdcdc;white-space:nowrap">Показать виртуальные средние точки</div>
<svg class="a" style="left:1092px;top:691px" width="188" height="17" viewBox="0 0 188 17"><path d="M44 1.3H187.5L183.5 15.5H51.5Z" fill="#555555" stroke="#6c6c6c" stroke-width="0.8"/><path d="M44 1.3H2.5L9 15.5H51.5" fill="none" stroke="#5e5e5e" stroke-width="0.9"/></svg>
<div class="a" style="left:1102px;top:694.5px;font-size:7.2px;line-height:9px;color:#dcdcdc;white-space:nowrap">Проект</div>
<div class="a" style="left:1144px;top:694.5px;font-size:7.15px;line-height:9px;color:#e4e4e4;white-space:nowrap">Параметры инструмента: Редактиров...</div>
<div class="a" style="left:1035px;top:710.5px;font-size:7.2px;line-height:9px;color:#d8d8d8;white-space:nowrap">X: -4.579</div>
<div class="a" style="left:1085px;top:710.5px;font-size:7.2px;line-height:9px;color:#d8d8d8;white-space:nowrap">Y: 594.770</div>
<div class="a" style="left:1134px;top:710.5px;font-size:7.2px;line-height:9px;color:#d8d8d8;white-space:nowrap">Z: 19.994</div>
<div class="a" style="left:1184px;top:710.5px;font-size:7.2px;line-height:9px;color:#5a5a5a;white-space:nowrap">W:</div>
<div class="a" style="left:1234px;top:710.5px;font-size:7.2px;line-height:9px;color:#5a5a5a;white-space:nowrap">H:</div>
</body></html>
